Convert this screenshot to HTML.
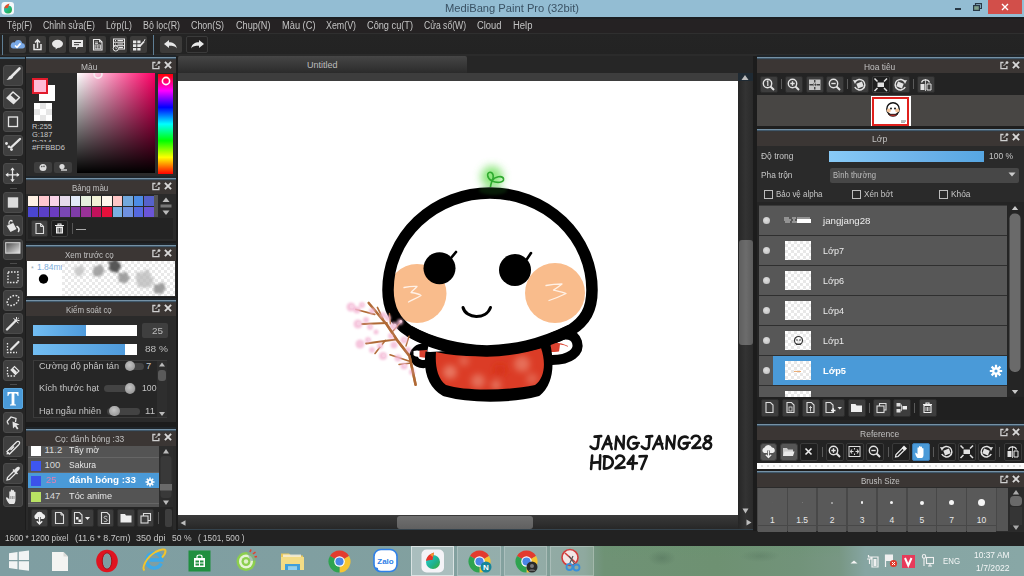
<!DOCTYPE html><html><head><meta charset="utf-8"><style>
*{margin:0;padding:0;box-sizing:border-box}
html,body{width:1024px;height:576px;overflow:hidden;background:#1f1f1f;font-family:"Liberation Sans",sans-serif}
body{position:relative}
div,span,svg{position:absolute}
.t{white-space:nowrap;line-height:1}
.btn{background:#3b3b3b;border:1px solid #262626;border-radius:2px}
.tool{left:3px;width:20px;height:21px;background:#3a3a3a;border-radius:2px}
.ph{height:16px;background:#393533;border-top:1px solid #557a94}
.ph .tt{top:3px;font-size:9px;color:#bdbdbd;white-space:nowrap;line-height:1}
</style></head><body>
<div style="left:0px;top:0px;width:1024px;height:17px;background:#93bdd3"></div>
<span class="t" style="left:445px;top:2.95px;font-size:11.5px;color:#3a5264;transform:scaleX(0.9706);transform-origin:0 0;">MediBang Paint Pro (32bit)</span>
<svg style="left:1px;top:1px" width="14" height="15" viewBox="0 0 14 15"><defs><linearGradient id="dg1" x1="0" y1="0" x2="1" y2="1"><stop offset="0" stop-color="#1fc6c8"/><stop offset="1" stop-color="#2aa836"/></linearGradient></defs><rect x="0.5" y="1" width="12.5" height="12.5" rx="3" fill="#f6f8fa"/><circle cx="7" cy="8.5" r="4" fill="url(#dg1)"/><path d="M3.2 7.5C3.5 5 5.5 3 8.5 2.5C8 4 7.5 5.5 7 7C5.5 7 4.5 7.2 3.2 7.5Z" fill="#e0502c"/></svg>
<div style="left:955px;top:8px;width:6px;height:2px;background:#283845"></div>
<svg style="left:973px;top:3px" width="9" height="8" viewBox="0 0 9 8"><rect x="0.6" y="2.6" width="5.8" height="4.8" fill="#7fa08a" stroke="#283845" stroke-width="1.2"/><path d="M2.5 2.5V0.6H8.4V5.5H6.5" fill="none" stroke="#283845" stroke-width="1.2"/></svg>
<div style="left:988px;top:0px;width:34px;height:14px;background:#d24f4a"></div>
<svg style="left:1001px;top:3px" width="8" height="8" viewBox="0 0 8 8"><path d="M1 1L7 7M7 1L1 7" stroke="#fff" stroke-width="1.4"/></svg>
<div style="left:0px;top:17px;width:1024px;height:16px;background:linear-gradient(#1b1e21 0,#1b1e21 2px,#252223 2.5px,#252223)"></div>
<div style="left:0px;top:33px;width:1024px;height:1px;background:#2f2f2f"></div>
<span class="t" style="left:6.5px;top:20.50px;font-size:10px;color:#c4c4c4;transform:scaleX(0.8334);transform-origin:0 0;">Tệp(F)</span>
<span class="t" style="left:43px;top:20.50px;font-size:10px;color:#c4c4c4;transform:scaleX(0.8741);transform-origin:0 0;">Chỉnh sửa(E)</span>
<span class="t" style="left:106px;top:20.50px;font-size:10px;color:#c4c4c4;transform:scaleX(0.8696);transform-origin:0 0;">Lớp(L)</span>
<span class="t" style="left:143px;top:20.50px;font-size:10px;color:#c4c4c4;transform:scaleX(0.8879);transform-origin:0 0;">Bộ lọc(R)</span>
<span class="t" style="left:191px;top:20.50px;font-size:10px;color:#c4c4c4;transform:scaleX(0.8863);transform-origin:0 0;">Chọn(S)</span>
<span class="t" style="left:235.5px;top:20.50px;font-size:10px;color:#c4c4c4;transform:scaleX(0.9130);transform-origin:0 0;">Chụp(N)</span>
<span class="t" style="left:281.5px;top:20.50px;font-size:10px;color:#c4c4c4;transform:scaleX(0.9277);transform-origin:0 0;">Màu (C)</span>
<span class="t" style="left:326px;top:20.50px;font-size:10px;color:#c4c4c4;transform:scaleX(0.8852);transform-origin:0 0;">Xem(V)</span>
<span class="t" style="left:367px;top:20.50px;font-size:10px;color:#c4c4c4;transform:scaleX(0.9198);transform-origin:0 0;">Công cụ(T)</span>
<span class="t" style="left:424px;top:20.50px;font-size:10px;color:#c4c4c4;transform:scaleX(0.8586);transform-origin:0 0;">Cửa sổ(W)</span>
<span class="t" style="left:477px;top:20.50px;font-size:10px;color:#c4c4c4;transform:scaleX(0.9377);transform-origin:0 0;">Cloud</span>
<span class="t" style="left:513px;top:20.50px;font-size:10px;color:#c4c4c4;transform:scaleX(0.9482);transform-origin:0 0;">Help</span>
<div style="left:0px;top:34px;width:1024px;height:22px;background:linear-gradient(#242424 0,#232323 20px,#2b2b2b 20.5px,#2b2b2b)"></div>
<div style="left:2px;top:35px;width:1px;height:20px;background:#5f7e94"></div>
<div style="left:153px;top:35px;width:1px;height:20px;background:#5f7e94"></div>
<div style="left:9px;top:36px;width:17px;height:17px;background:#3c3b3a;border-radius:2px"></div>
<div style="left:29px;top:36px;width:17px;height:17px;background:#3c3b3a;border-radius:2px"></div>
<div style="left:49px;top:36px;width:17px;height:17px;background:#3c3b3a;border-radius:2px"></div>
<div style="left:69px;top:36px;width:17px;height:17px;background:#3c3b3a;border-radius:2px"></div>
<div style="left:89px;top:36px;width:17px;height:17px;background:#3c3b3a;border-radius:2px"></div>
<div style="left:110px;top:36px;width:17px;height:17px;background:#3c3b3a;border-radius:2px"></div>
<div style="left:130px;top:36px;width:17px;height:17px;background:#3c3b3a;border-radius:2px"></div>
<svg style="left:9px;top:36px" width="17" height="17" viewBox="0 0 17 17"><path d="M4 12.5H13.5A2.6 2.6 0 0 0 13.2 7.3A4 4 0 0 0 5.6 6.5A3 3 0 0 0 4 12.5Z" fill="#7aa9e6"/><path d="M6 9.5L8 11.4L11.6 7.4" fill="none" stroke="#fff" stroke-width="1.6"/></svg>
<svg style="left:29px;top:36px" width="17" height="17" viewBox="0 0 17 17"><path d="M5 8V13.5H12V8" fill="none" stroke="#e8e8e8" stroke-width="1.5"/><path d="M8.5 12V4M6 6.5L8.5 3.8L11 6.5" fill="none" stroke="#e8e8e8" stroke-width="1.5"/></svg>
<svg style="left:49px;top:36px" width="17" height="17" viewBox="0 0 17 17"><ellipse cx="8.5" cy="7.8" rx="5.5" ry="4" fill="#e8e8e8"/><path d="M7 11L6.5 13.5L10 11Z" fill="#e8e8e8"/></svg>
<svg style="left:69px;top:36px" width="17" height="17" viewBox="0 0 17 17"><path d="M3 4H14V11H9L7 13.5V11H3Z" fill="#e8e8e8"/><path d="M5 6.5H12M5 8.7H10" stroke="#3c3b3a" stroke-width="1"/></svg>
<svg style="left:89px;top:36px" width="17" height="17" viewBox="0 0 17 17"><path d="M4.5 3.5H10.5L13 6V14H4.5Z" fill="none" stroke="#e8e8e8" stroke-width="1.1"/><path d="M10.5 3.5V6H13" fill="none" stroke="#e8e8e8" stroke-width="0.9"/><path d="M6 6H9M6 7.5H9" stroke="#e8e8e8" stroke-width="0.8"/><rect x="6" y="9" width="5.5" height="3.8" fill="none" stroke="#e8e8e8" stroke-width="0.8"/><path d="M6 10.9H11.5M8.7 9V12.8" stroke="#e8e8e8" stroke-width="0.6"/></svg>
<svg style="left:110px;top:36px" width="17" height="17" viewBox="0 0 17 17"><rect x="3.5" y="3" width="11" height="10" fill="none" stroke="#e8e8e8" stroke-width="1"/><path d="M3.5 6.3H14.5M3.5 9.6H14.5" stroke="#e8e8e8" stroke-width="0.9"/><path d="M5 4.7H6M5 8H6M7.5 4.7H13M7.5 8H13M9 11.3H13" stroke="#e8e8e8" stroke-width="1.2"/><circle cx="5.8" cy="12.5" r="2.6" fill="#3c3b3a" stroke="#e8e8e8" stroke-width="1"/><path d="M5.8 11.2V12.6H7" fill="none" stroke="#e8e8e8" stroke-width="0.7"/></svg>
<svg style="left:130px;top:36px" width="17" height="17" viewBox="0 0 17 17"><path d="M3 4.5H6.3V7.3H3ZM7.3 4.5H10.5V7.3H7.3ZM3 8.3H6.3V11H3ZM7.3 8.3H10.5V11H7.3ZM3 12H6.3V14.5H3ZM7.3 12H10.5V14.5H7.3Z" fill="#e8e8e8"/><path d="M9.5 10.5L14 5.5" stroke="#e8e8e8" stroke-width="1.8"/><path d="M14 5.5L15 3.2" stroke="#e8e8e8" stroke-width="1"/></svg>
<div style="left:160px;top:36px;width:22px;height:17px;background:#3c3b3a;border-radius:2px"></div>
<div style="left:186px;top:36px;width:22px;height:17px;background:#232222;border:1px solid #3a3a3a;border-radius:2px"></div>
<svg style="left:160px;top:36px" width="22" height="17" viewBox="0 0 22 17"><path d="M4 8L9 4V6.3C13 6.3 16 8 17 12.5C15 10 13 9.8 9 9.8V12Z" fill="#e8e8e8"/></svg>
<svg style="left:186px;top:36px" width="22" height="17" viewBox="0 0 22 17"><path d="M18 8L13 4V6.3C9 6.3 6 8 5 12.5C7 10 9 9.8 13 9.8V12Z" fill="#e8e8e8"/></svg>
<div style="left:0px;top:56px;width:1024px;height:2px;background:#1e1e1e"></div>
<div style="left:0px;top:58px;width:25px;height:476px;background:#252525"></div>
<div style="left:0px;top:57px;width:25px;height:2px;background:#4b6a80"></div>
<div style="left:3px;top:65px;width:20px;height:21px;background:#3f3f3f;border:1px solid #4b4b4b;border-radius:3px"></div>
<div style="left:3px;top:88px;width:20px;height:21px;background:#3f3f3f;border:1px solid #4b4b4b;border-radius:3px"></div>
<div style="left:3px;top:111px;width:20px;height:21px;background:#3f3f3f;border:1px solid #4b4b4b;border-radius:3px"></div>
<div style="left:3px;top:135px;width:20px;height:21px;background:#3f3f3f;border:1px solid #4b4b4b;border-radius:3px"></div>
<div style="left:3px;top:163px;width:20px;height:21px;background:#3f3f3f;border:1px solid #4b4b4b;border-radius:3px"></div>
<div style="left:3px;top:192px;width:20px;height:21px;background:#3f3f3f;border:1px solid #4b4b4b;border-radius:3px"></div>
<div style="left:3px;top:215px;width:20px;height:21px;background:#3f3f3f;border:1px solid #4b4b4b;border-radius:3px"></div>
<div style="left:3px;top:239px;width:20px;height:21px;background:#3f3f3f;border:1px solid #4b4b4b;border-radius:3px"></div>
<div style="left:3px;top:267px;width:20px;height:21px;background:#3f3f3f;border:1px solid #4b4b4b;border-radius:3px"></div>
<div style="left:3px;top:290px;width:20px;height:21px;background:#3f3f3f;border:1px solid #4b4b4b;border-radius:3px"></div>
<div style="left:3px;top:313px;width:20px;height:21px;background:#3f3f3f;border:1px solid #4b4b4b;border-radius:3px"></div>
<div style="left:3px;top:337px;width:20px;height:21px;background:#3f3f3f;border:1px solid #4b4b4b;border-radius:3px"></div>
<div style="left:3px;top:360px;width:20px;height:21px;background:#3f3f3f;border:1px solid #4b4b4b;border-radius:3px"></div>
<div style="left:3px;top:388px;width:20px;height:21px;background:#4a9ad8;border:1px solid #5aa8e0;border-radius:2px"></div>
<div style="left:3px;top:412px;width:20px;height:21px;background:#3f3f3f;border:1px solid #4b4b4b;border-radius:3px"></div>
<div style="left:3px;top:436px;width:20px;height:21px;background:#3f3f3f;border:1px solid #4b4b4b;border-radius:3px"></div>
<div style="left:3px;top:463px;width:20px;height:21px;background:#3f3f3f;border:1px solid #4b4b4b;border-radius:3px"></div>
<div style="left:3px;top:486px;width:20px;height:21px;background:#3f3f3f;border:1px solid #4b4b4b;border-radius:3px"></div>
<div style="left:10px;top:159px;width:7px;height:1px;background:#4c4c4c"></div>
<div style="left:10px;top:188px;width:7px;height:1px;background:#4c4c4c"></div>
<div style="left:10px;top:263px;width:7px;height:1px;background:#4c4c4c"></div>
<div style="left:10px;top:384px;width:7px;height:1px;background:#4c4c4c"></div>
<div style="left:10px;top:459px;width:7px;height:1px;background:#4c4c4c"></div>
<svg style="left:3px;top:65px" width="20" height="21" viewBox="0 0 20 21"><path d="M16.5 3.5L9 11" stroke="#e6e6e6" stroke-width="2.6" stroke-linecap="round"/><path d="M8.5 10.5C6.5 10.5 5.5 12 5 13.5L3.5 14.5C5.5 15 8.5 14.5 10 12.5Z" fill="#e6e6e6"/></svg>
<svg style="left:3px;top:88px" width="20" height="21" viewBox="0 0 20 21"><path d="M10 4L16.5 9.5L10.5 15.5L4 10Z" fill="none" stroke="#e6e6e6" stroke-width="1.5" stroke-linejoin="round"/><path d="M4 10L7.2 6.8L13.5 12.5L10.5 15.5Z" fill="#e6e6e6"/></svg>
<svg style="left:3px;top:111px" width="20" height="21" viewBox="0 0 20 21"><rect x="5.5" y="6" width="9" height="9.5" fill="none" stroke="#e6e6e6" stroke-width="1.3"/></svg>
<svg style="left:3px;top:135px" width="20" height="21" viewBox="0 0 20 21"><path d="M17 4L8 12.5" stroke="#e6e6e6" stroke-width="2.4" stroke-linecap="round"/><circle cx="3.5" cy="8.5" r="1.4" fill="#e6e6e6"/><circle cx="6" cy="11.8" r="1.4" fill="#e6e6e6"/><circle cx="8.5" cy="14.6" r="1.4" fill="#e6e6e6"/></svg>
<svg style="left:3px;top:163px" width="20" height="21" viewBox="0 0 20 21"><path d="M9.5 5V18.5M3 11.8H16" stroke="#e6e6e6" stroke-width="1.3"/><path d="M9.5 4.5L7.3 7.3H11.7ZM9.5 19L7.3 16.2H11.7ZM2.5 11.8L5.3 9.6V14ZM16.5 11.8L13.7 9.6V14Z" fill="#e6e6e6"/></svg>
<svg style="left:3px;top:192px" width="20" height="21" viewBox="0 0 20 21"><rect x="4.8" y="5.3" width="10.4" height="10.4" fill="#dcdcdc"/></svg>
<svg style="left:3px;top:215px" width="20" height="21" viewBox="0 0 20 21"><path d="M3.5 10.5L10 7.5L13.5 14L7.5 17Z" fill="#e6e6e6"/><path d="M3.5 10.5L10 7.5" stroke="#424242" stroke-width="0.8"/><path d="M6 9.5C5.5 5.5 8 4.5 9.5 6.5" fill="none" stroke="#e6e6e6" stroke-width="1.3"/><path d="M14 11.5C15.5 12.5 16.5 14.5 15.5 16.5" fill="none" stroke="#e6e6e6" stroke-width="1.6" stroke-linecap="round"/></svg>
<svg style="left:3px;top:239px" width="20" height="21" viewBox="0 0 20 21"><defs><linearGradient id="gg" x1="0" y1="0" x2="1" y2="1"><stop offset="0" stop-color="#4a4a4a"/><stop offset="1" stop-color="#e8e8e8"/></linearGradient></defs><rect x="2.7" y="3.7" width="14.3" height="10.5" fill="url(#gg)" stroke="#d8d8d8" stroke-width="1"/></svg>
<svg style="left:3px;top:267px" width="20" height="21" viewBox="0 0 20 21"><rect x="5" y="5" width="10" height="10.5" fill="none" stroke="#e6e6e6" stroke-width="1.4" stroke-dasharray="1.6 1.4"/></svg>
<svg style="left:3px;top:290px" width="20" height="21" viewBox="0 0 20 21"><ellipse cx="10" cy="10.5" rx="6.5" ry="4.2" transform="rotate(-35 10 10.5)" fill="none" stroke="#e6e6e6" stroke-width="1.4" stroke-dasharray="1.6 1.4"/></svg>
<svg style="left:3px;top:313px" width="20" height="21" viewBox="0 0 20 21"><path d="M4 16.5L12 8.5" stroke="#e6e6e6" stroke-width="2.4" stroke-linecap="round"/><path d="M13.5 4V6M16.5 7.5H14.5M15.8 5L14.5 6.2M12 6.5L10.5 5.5M14 9L15.5 10" stroke="#e6e6e6" stroke-width="1"/><circle cx="13" cy="7.5" r="1.5" fill="#e6e6e6"/></svg>
<svg style="left:3px;top:337px" width="20" height="21" viewBox="0 0 20 21"><path d="M4.5 6V15.5H14" fill="none" stroke="#e6e6e6" stroke-width="1.3" stroke-dasharray="1.6 1.4"/><path d="M8 12.5L15.5 5" stroke="#e6e6e6" stroke-width="2.2" stroke-linecap="round"/></svg>
<svg style="left:3px;top:360px" width="20" height="21" viewBox="0 0 20 21"><path d="M4.5 7V16H13" fill="none" stroke="#e6e6e6" stroke-width="1.3" stroke-dasharray="1.6 1.4"/><path d="M8 10L11.5 6.5L16 11L12.5 14.5Z" fill="none" stroke="#e6e6e6" stroke-width="1.1"/><path d="M8 10L10 8L14 12L12.5 14.5Z" fill="#e6e6e6"/></svg>
<svg style="left:3px;top:388px" width="20" height="21" viewBox="0 0 20 21"><path d="M4.5 4H15.5V8H14.6C14.3 6.2 13.7 5.6 11.4 5.6V15.4C11.4 16.3 12 16.6 13 16.6V17.5H7V16.6C8 16.6 8.6 16.3 8.6 15.4V5.6C6.3 5.6 5.7 6.2 5.4 8H4.5Z" fill="#fff"/></svg>
<svg style="left:3px;top:412px" width="20" height="21" viewBox="0 0 20 21"><path d="M4 9.5L8 5L13 6.5L12.5 10M5.5 12.5L4 9.5" fill="none" stroke="#e6e6e6" stroke-width="1.3"/><path d="M9.5 9.5L16.5 12.5L13.5 13.5L15.5 16.5L14 17.5L12 14.5L10 16.5Z" fill="#e6e6e6"/></svg>
<svg style="left:3px;top:436px" width="20" height="21" viewBox="0 0 20 21"><path d="M4 15.5L13 6.5C14 5.5 15.5 5 16.2 5.8C17 6.5 16.5 8 15.5 9L6.5 18Z" fill="none" stroke="#e6e6e6" stroke-width="1.3"/><path d="M4 15.5L6.5 18L3.5 18.5Z" fill="#e6e6e6"/><path d="M11 10.5L7.5 14" stroke="#e6e6e6" stroke-width="1.5"/></svg>
<svg style="left:3px;top:463px" width="20" height="21" viewBox="0 0 20 21"><path d="M4 17L4.5 14.5L11 8L13 10L6.5 16.5Z" fill="none" stroke="#e6e6e6" stroke-width="1.3"/><path d="M10.5 7.5L12 6L13.5 4.5C14.5 3.5 16.5 3.5 16.8 4.8C17.2 6 16 7 15 8L13.5 9.5Z" fill="#e6e6e6"/><path d="M10 6.5L14.5 11" stroke="#e6e6e6" stroke-width="1.4"/></svg>
<svg style="left:3px;top:486px" width="20" height="21" viewBox="0 0 20 21"><path d="M6.5 18C5 16.5 3 13.5 3 12C3 11 4.2 11 5 12L6.3 13.5V6C6.3 5 7.8 5 7.8 6V10.5V4.3C7.8 3.3 9.4 3.3 9.4 4.3V10.5V4.8C9.4 3.8 11 3.8 11 4.8V10.8V6.3C11 5.3 12.5 5.3 12.5 6.3V13C12.5 15.5 12 17 11 18Z" fill="#e6e6e6"/><path d="M7.8 10V13M9.4 10V13M11 10V13" stroke="#424242" stroke-width="0.5"/></svg>
<div style="left:25px;top:58px;width:153px;height:476px;background:#1c1c1c"></div>
<div style="left:26px;top:73px;width:150px;height:104px;background:#2a2a2a"></div>
<div style="left:26px;top:55px;width:150px;height:2px;background:#1f252a"></div><div style="left:26px;top:57px;width:150px;height:1px;background:#7591a5"></div><div style="left:26px;top:58px;width:150px;height:1px;background:#41586a"></div><div style="left:26px;top:59px;width:150px;height:14px;background:linear-gradient(#333a40 0,#3b3634 1px,#3b3634)"></div><span class="t" style="left:81px;top:61.60px;font-size:9.6px;color:#c0c0c0;transform:scaleX(0.8729);transform-origin:0 0;">Màu</span><svg style="left:151.5px;top:60.5px" width="9" height="9" viewBox="0 0 9 9"><path d="M3.5 1.5H0.9V7.6H6.9V5" fill="none" stroke="#cfcfcf" stroke-width="1.3"/><path d="M3.5 5L7.2 1.3" stroke="#cfcfcf" stroke-width="1"/><circle cx="7" cy="1.6" r="1.4" fill="#cfcfcf"/></svg><svg style="left:164px;top:60.5px" width="8" height="8" viewBox="0 0 8 8"><path d="M0.9 0.9L7.1 7.1M7.1 0.9L0.9 7.1" stroke="#d8d8d8" stroke-width="1.9"/></svg>
<div style="left:26px;top:194px;width:150px;height:47px;background:#2a2a2a"></div>
<div style="left:26px;top:176px;width:150px;height:2px;background:#1f252a"></div><div style="left:26px;top:178px;width:150px;height:1px;background:#7591a5"></div><div style="left:26px;top:179px;width:150px;height:1px;background:#41586a"></div><div style="left:26px;top:180px;width:150px;height:14px;background:linear-gradient(#333a40 0,#3b3634 1px,#3b3634)"></div><span class="t" style="left:71.5px;top:182.60px;font-size:9.6px;color:#c0c0c0;transform:scaleX(0.8295);transform-origin:0 0;">Bảng màu</span><svg style="left:151.5px;top:181.5px" width="9" height="9" viewBox="0 0 9 9"><path d="M3.5 1.5H0.9V7.6H6.9V5" fill="none" stroke="#cfcfcf" stroke-width="1.3"/><path d="M3.5 5L7.2 1.3" stroke="#cfcfcf" stroke-width="1"/><circle cx="7" cy="1.6" r="1.4" fill="#cfcfcf"/></svg><svg style="left:164px;top:181.5px" width="8" height="8" viewBox="0 0 8 8"><path d="M0.9 0.9L7.1 7.1M7.1 0.9L0.9 7.1" stroke="#d8d8d8" stroke-width="1.9"/></svg>
<div style="left:26px;top:261px;width:150px;height:36px;background:#2a2a2a"></div>
<div style="left:26px;top:243px;width:150px;height:2px;background:#1f252a"></div><div style="left:26px;top:245px;width:150px;height:1px;background:#7591a5"></div><div style="left:26px;top:246px;width:150px;height:1px;background:#41586a"></div><div style="left:26px;top:247px;width:150px;height:14px;background:linear-gradient(#333a40 0,#3b3634 1px,#3b3634)"></div><span class="t" style="left:65.3px;top:249.60px;font-size:9.6px;color:#c0c0c0;transform:scaleX(0.8328);transform-origin:0 0;">Xem trước cọ</span><svg style="left:151.5px;top:248.5px" width="9" height="9" viewBox="0 0 9 9"><path d="M3.5 1.5H0.9V7.6H6.9V5" fill="none" stroke="#cfcfcf" stroke-width="1.3"/><path d="M3.5 5L7.2 1.3" stroke="#cfcfcf" stroke-width="1"/><circle cx="7" cy="1.6" r="1.4" fill="#cfcfcf"/></svg><svg style="left:164px;top:248.5px" width="8" height="8" viewBox="0 0 8 8"><path d="M0.9 0.9L7.1 7.1M7.1 0.9L0.9 7.1" stroke="#d8d8d8" stroke-width="1.9"/></svg>
<div style="left:26px;top:316px;width:150px;height:106px;background:#2a2a2a"></div>
<div style="left:26px;top:298px;width:150px;height:2px;background:#1f252a"></div><div style="left:26px;top:300px;width:150px;height:1px;background:#7591a5"></div><div style="left:26px;top:301px;width:150px;height:1px;background:#41586a"></div><div style="left:26px;top:302px;width:150px;height:14px;background:linear-gradient(#333a40 0,#3b3634 1px,#3b3634)"></div><span class="t" style="left:66px;top:304.60px;font-size:9.6px;color:#c0c0c0;transform:scaleX(0.8254);transform-origin:0 0;">Kiểm soát cọ</span><svg style="left:151.5px;top:303.5px" width="9" height="9" viewBox="0 0 9 9"><path d="M3.5 1.5H0.9V7.6H6.9V5" fill="none" stroke="#cfcfcf" stroke-width="1.3"/><path d="M3.5 5L7.2 1.3" stroke="#cfcfcf" stroke-width="1"/><circle cx="7" cy="1.6" r="1.4" fill="#cfcfcf"/></svg><svg style="left:164px;top:303.5px" width="8" height="8" viewBox="0 0 8 8"><path d="M0.9 0.9L7.1 7.1M7.1 0.9L0.9 7.1" stroke="#d8d8d8" stroke-width="1.9"/></svg>
<div style="left:26px;top:446px;width:150px;height:85px;background:#2a2a2a"></div>
<div style="left:26px;top:427px;width:150px;height:2px;background:#1f252a"></div><div style="left:26px;top:429px;width:150px;height:1px;background:#7591a5"></div><div style="left:26px;top:430px;width:150px;height:1px;background:#41586a"></div><div style="left:26px;top:431px;width:150px;height:15px;background:linear-gradient(#333a40 0,#3b3634 1px,#3b3634)"></div><span class="t" style="left:55px;top:433.60px;font-size:9.6px;color:#c0c0c0;transform:scaleX(0.8773);transform-origin:0 0;">Cọ: đánh bóng :33</span><svg style="left:151.5px;top:432.5px" width="9" height="9" viewBox="0 0 9 9"><path d="M3.5 1.5H0.9V7.6H6.9V5" fill="none" stroke="#cfcfcf" stroke-width="1.3"/><path d="M3.5 5L7.2 1.3" stroke="#cfcfcf" stroke-width="1"/><circle cx="7" cy="1.6" r="1.4" fill="#cfcfcf"/></svg><svg style="left:164px;top:432.5px" width="8" height="8" viewBox="0 0 8 8"><path d="M0.9 0.9L7.1 7.1M7.1 0.9L0.9 7.1" stroke="#d8d8d8" stroke-width="1.9"/></svg>
<div style="left:178px;top:56px;width:575px;height:474px;background:#262626"></div>
<div style="left:178px;top:56px;width:289px;height:17px;background:linear-gradient(#464646,#2b2b2b);border-radius:2px 2px 0 0"></div>
<span class="t" style="left:307px;top:60.50px;font-size:9px;color:#bdbdbd;">Untitled</span>
<div style="left:178px;top:73px;width:561px;height:8px;background:#3d3d3d"></div>
<div style="left:178px;top:81px;width:560px;height:434px;background:#ffffff"></div>
<div style="left:738px;top:73px;width:15px;height:457px;background:linear-gradient(90deg,#262626,#333 50%,#2a2a2a)"></div>
<div style="left:738px;top:73px;width:15px;height:8px;background:#1f2a33"></div>
<svg style="left:741px;top:74px" width="8" height="7" viewBox="0 0 8 7"><path d="M4 1L7.5 6H0.5Z" fill="#bdbdbd"/></svg>
<div style="left:739px;top:239.5px;width:14px;height:105px;background:linear-gradient(90deg,#5e5e5e,#6c6c6c 50%,#5c5c5c);border-radius:3px"></div>
<svg style="left:742px;top:508px" width="7" height="6" viewBox="0 0 7 6"><path d="M3.5 5.5L0.5 0.5H6.5Z" fill="#bdbdbd"/></svg>
<div style="left:178px;top:515px;width:560px;height:15px;background:linear-gradient(#3a3a3a,#262626)"></div>
<div style="left:178px;top:529px;width:575px;height:1px;background:#34424c"></div>
<svg style="left:179.5px;top:520px" width="6" height="6" viewBox="0 0 6 6"><path d="M0.5 3L5.5 0.2V5.8Z" fill="#bdbdbd"/></svg>
<svg style="left:746px;top:519px" width="6" height="7" viewBox="0 0 6 7"><path d="M5.5 3.5L0.5 0.5V6.5Z" fill="#bdbdbd"/></svg>
<div style="left:397px;top:515.8px;width:136px;height:13.2px;background:linear-gradient(#707070,#606060);border-radius:3px"></div>
<div style="left:0px;top:530px;width:1024px;height:16px;background:#222222"></div>
<span class="t" style="left:5px;top:534.30px;font-size:9px;color:#c8c8c8;transform:scaleX(0.9130);transform-origin:0 0;">1600 * 1200 pixel</span>
<span class="t" style="left:75px;top:534.30px;font-size:9px;color:#c8c8c8;transform:scaleX(0.9937);transform-origin:0 0;">(11.6 * 8.7cm)</span>
<span class="t" style="left:136px;top:534.30px;font-size:9px;color:#c8c8c8;transform:scaleX(0.9992);transform-origin:0 0;">350 dpi</span>
<span class="t" style="left:172px;top:534.30px;font-size:9px;color:#c8c8c8;transform:scaleX(0.9506);transform-origin:0 0;">50 %</span>
<span class="t" style="left:197.5px;top:534.30px;font-size:9px;color:#c8c8c8;transform:scaleX(0.9113);transform-origin:0 0;">( 1501, 500 )</span>
<div style="left:753px;top:56px;width:271px;height:475px;background:#1c1c1c"></div>
<div style="left:757px;top:73px;width:267px;height:22px;background:#232323"></div>
<div style="left:757px;top:95px;width:267px;height:31px;background:#484644"></div>
<div style="left:757px;top:55px;width:267px;height:2px;background:#1f252a"></div><div style="left:757px;top:57px;width:267px;height:1px;background:#7591a5"></div><div style="left:757px;top:58px;width:267px;height:1px;background:#41586a"></div><div style="left:757px;top:59px;width:267px;height:14px;background:linear-gradient(#333a40 0,#3b3634 1px,#3b3634)"></div><span class="t" style="left:864px;top:61.60px;font-size:9.6px;color:#c0c0c0;transform:scaleX(0.8754);transform-origin:0 0;">Hoa tiêu</span><svg style="left:999.5px;top:60.5px" width="9" height="9" viewBox="0 0 9 9"><path d="M3.5 1.5H0.9V7.6H6.9V5" fill="none" stroke="#cfcfcf" stroke-width="1.3"/><path d="M3.5 5L7.2 1.3" stroke="#cfcfcf" stroke-width="1"/><circle cx="7" cy="1.6" r="1.4" fill="#cfcfcf"/></svg><svg style="left:1012px;top:60.5px" width="8" height="8" viewBox="0 0 8 8"><path d="M0.9 0.9L7.1 7.1M7.1 0.9L0.9 7.1" stroke="#d8d8d8" stroke-width="1.9"/></svg>
<div style="left:757px;top:146px;width:267px;height:277px;background:#2a2a2a"></div>
<div style="left:757px;top:127px;width:267px;height:2px;background:#1f252a"></div><div style="left:757px;top:129px;width:267px;height:1px;background:#7591a5"></div><div style="left:757px;top:130px;width:267px;height:1px;background:#41586a"></div><div style="left:757px;top:131px;width:267px;height:15px;background:linear-gradient(#333a40 0,#3b3634 1px,#3b3634)"></div><span class="t" style="left:872px;top:133.60px;font-size:9.6px;color:#c0c0c0;transform:scaleX(0.9015);transform-origin:0 0;">Lớp</span><svg style="left:999.5px;top:132.5px" width="9" height="9" viewBox="0 0 9 9"><path d="M3.5 1.5H0.9V7.6H6.9V5" fill="none" stroke="#cfcfcf" stroke-width="1.3"/><path d="M3.5 5L7.2 1.3" stroke="#cfcfcf" stroke-width="1"/><circle cx="7" cy="1.6" r="1.4" fill="#cfcfcf"/></svg><svg style="left:1012px;top:132.5px" width="8" height="8" viewBox="0 0 8 8"><path d="M0.9 0.9L7.1 7.1M7.1 0.9L0.9 7.1" stroke="#d8d8d8" stroke-width="1.9"/></svg>
<div style="left:757px;top:440px;width:267px;height:29px;background:#232323"></div>
<div style="left:757px;top:422px;width:267px;height:2px;background:#1f252a"></div><div style="left:757px;top:424px;width:267px;height:1px;background:#7591a5"></div><div style="left:757px;top:425px;width:267px;height:1px;background:#41586a"></div><div style="left:757px;top:426px;width:267px;height:14px;background:linear-gradient(#333a40 0,#3b3634 1px,#3b3634)"></div><span class="t" style="left:860px;top:428.60px;font-size:9.6px;color:#c0c0c0;transform:scaleX(0.8874);transform-origin:0 0;">Reference</span><svg style="left:999.5px;top:427.5px" width="9" height="9" viewBox="0 0 9 9"><path d="M3.5 1.5H0.9V7.6H6.9V5" fill="none" stroke="#cfcfcf" stroke-width="1.3"/><path d="M3.5 5L7.2 1.3" stroke="#cfcfcf" stroke-width="1"/><circle cx="7" cy="1.6" r="1.4" fill="#cfcfcf"/></svg><svg style="left:1012px;top:427.5px" width="8" height="8" viewBox="0 0 8 8"><path d="M0.9 0.9L7.1 7.1M7.1 0.9L0.9 7.1" stroke="#d8d8d8" stroke-width="1.9"/></svg>
<div style="left:757px;top:487px;width:267px;height:44px;background:#2a2a2a"></div>
<div style="left:757px;top:469px;width:267px;height:2px;background:#1f252a"></div><div style="left:757px;top:471px;width:267px;height:1px;background:#7591a5"></div><div style="left:757px;top:472px;width:267px;height:1px;background:#41586a"></div><div style="left:757px;top:473px;width:267px;height:14px;background:linear-gradient(#333a40 0,#3b3634 1px,#3b3634)"></div><span class="t" style="left:860.5px;top:475.60px;font-size:9.6px;color:#c0c0c0;transform:scaleX(0.8359);transform-origin:0 0;">Brush Size</span><svg style="left:999.5px;top:474.5px" width="9" height="9" viewBox="0 0 9 9"><path d="M3.5 1.5H0.9V7.6H6.9V5" fill="none" stroke="#cfcfcf" stroke-width="1.3"/><path d="M3.5 5L7.2 1.3" stroke="#cfcfcf" stroke-width="1"/><circle cx="7" cy="1.6" r="1.4" fill="#cfcfcf"/></svg><svg style="left:1012px;top:474.5px" width="8" height="8" viewBox="0 0 8 8"><path d="M0.9 0.9L7.1 7.1M7.1 0.9L0.9 7.1" stroke="#d8d8d8" stroke-width="1.9"/></svg>
<div style="left:0px;top:546px;width:1024px;height:30px;background:linear-gradient(90deg,#7f9ea2 0%,#809fa1 30%,#83a19e 50%,#7d9b90 57%,#6f9275 59%,#6e9172 70%,#72937a 78%,#789784 82%,#86a5a2 84.5%,#88a7a6 100%)"></div>
<div style="left:600px;top:546px;width:240px;height:30px;background:radial-gradient(ellipse 14px 8px at 62px 12px,rgba(70,100,80,0.35),transparent),radial-gradient(ellipse 20px 6px at 160px 10px,rgba(70,100,80,0.25),transparent),linear-gradient(rgba(100,150,110,0.15),transparent 40%)"></div>
<div style="left:77px;top:73px;width:78px;height:100px;background:linear-gradient(to top,#000,rgba(0,0,0,0)),linear-gradient(to right,#fff,#ff0066)"></div>
<div style="left:158px;top:74px;width:15px;height:100px;background:linear-gradient(#ff0000 0%,#ff00ff 16.7%,#0000ff 33.3%,#00ffff 50%,#00ff00 66.7%,#ffff00 83.3%,#ff0000 100%)"></div>
<svg style="left:160px;top:75px" width="12" height="12" viewBox="0 0 12 12"><circle cx="6" cy="6" r="3.6" fill="none" stroke="#fff" stroke-width="1.6"/></svg>
<svg style="left:92px;top:73px" width="12" height="10" viewBox="0 0 12 10"><circle cx="6" cy="1.2" r="3.9" fill="none" stroke="#f6e8ee" stroke-width="1.8"/></svg>
<div style="left:39px;top:85px;width:16px;height:16px;background:#ffffff"></div>
<div style="left:32px;top:78px;width:16px;height:16px;background:#ffbbd6;border:2px solid #e21b2c"></div>
<div style="left:34px;top:103px;width:18px;height:18px;background-color:#fff;background-image:linear-gradient(45deg,#e6e6e6 25%,transparent 25%,transparent 75%,#e6e6e6 75%),linear-gradient(45deg,#e6e6e6 25%,transparent 25%,transparent 75%,#e6e6e6 75%);background-size:12px 12px;background-position:0 0,6px 6px"></div>
<span class="t" style="left:32px;top:123.25px;font-size:7.5px;color:#c6c6c6;">R:255</span>
<span class="t" style="left:32px;top:130.55px;font-size:7.5px;color:#c6c6c6;">G:187</span>
<div style="left:30px;top:137.5px;width:50px;height:4px;overflow:hidden"><span class="t" style="left:2px;top:1.25px;font-size:7.5px;color:#c6c6c6;">B:214</span></div>
<span class="t" style="left:32px;top:144.25px;font-size:7.5px;color:#c6c6c6;">#FFBBD6</span>
<div style="left:34px;top:162px;width:18px;height:11px;background:#3e3e3e;border-radius:2px"></div>
<div style="left:54px;top:162px;width:18px;height:11px;background:#3e3e3e;border-radius:2px"></div>
<svg style="left:38px;top:163px" width="10" height="9" viewBox="0 0 10 9"><circle cx="5" cy="4.5" r="3.5" fill="#ddd"/><circle cx="3.8" cy="3.6" r="0.8" fill="#555"/><circle cx="6" cy="3.4" r="0.8" fill="#555"/></svg>
<svg style="left:58px;top:163px" width="10" height="9" viewBox="0 0 10 9"><circle cx="4" cy="3.5" r="2.6" fill="#ddd"/><path d="M3 7H9" stroke="#ddd" stroke-width="1.4"/></svg>
<div style="left:28px;top:196px;width:9.5px;height:9.5px;background:#fff2e4"></div>
<div style="left:28px;top:207px;width:9.5px;height:9.5px;background:#4a46d0"></div>
<div style="left:39px;top:196px;width:9.5px;height:9.5px;background:#ffc9cf"></div>
<div style="left:39px;top:207px;width:9.5px;height:9.5px;background:#5b3fc6"></div>
<div style="left:49.5px;top:196px;width:9.5px;height:9.5px;background:#f9d3e8"></div>
<div style="left:49.5px;top:207px;width:9.5px;height:9.5px;background:#6b3cc0"></div>
<div style="left:60px;top:196px;width:9.5px;height:9.5px;background:#e6daea"></div>
<div style="left:60px;top:207px;width:9.5px;height:9.5px;background:#7a47b4"></div>
<div style="left:70.5px;top:196px;width:9.5px;height:9.5px;background:#e2eaf8"></div>
<div style="left:70.5px;top:207px;width:9.5px;height:9.5px;background:#7f3ca9"></div>
<div style="left:81px;top:196px;width:9.5px;height:9.5px;background:#e6f0de"></div>
<div style="left:81px;top:207px;width:9.5px;height:9.5px;background:#993298"></div>
<div style="left:91.5px;top:196px;width:9.5px;height:9.5px;background:#f2f2d6"></div>
<div style="left:91.5px;top:207px;width:9.5px;height:9.5px;background:#c2115b"></div>
<div style="left:102px;top:196px;width:9.5px;height:9.5px;background:#fff7ec"></div>
<div style="left:102px;top:207px;width:9.5px;height:9.5px;background:#e6103b"></div>
<div style="left:112.5px;top:196px;width:9.5px;height:9.5px;background:#ffc7c6"></div>
<div style="left:112.5px;top:207px;width:9.5px;height:9.5px;background:#7bb0e1"></div>
<div style="left:123px;top:196px;width:9.5px;height:9.5px;background:#73a9dd"></div>
<div style="left:123px;top:207px;width:9.5px;height:9.5px;background:#6f91e0"></div>
<div style="left:133.5px;top:196px;width:9.5px;height:9.5px;background:#4d8de6"></div>
<div style="left:133.5px;top:207px;width:9.5px;height:9.5px;background:#5569df"></div>
<div style="left:144px;top:196px;width:9.5px;height:9.5px;background:#5662cb"></div>
<div style="left:144px;top:207px;width:9.5px;height:9.5px;background:#6b55d8"></div>
<div style="left:154px;top:195px;width:4px;height:22px;background:#555"></div>
<svg style="left:159px;top:196px" width="14" height="21" viewBox="0 0 14 21"><path d="M7 1.5L3.5 6H10.5Z" fill="#bbb"/><rect x="1.5" y="8.5" width="11" height="3" fill="#777"/><path d="M7 19L3.5 14.5H10.5Z" fill="#bbb"/></svg>
<div style="left:28px;top:218px;width:145px;height:21px;background:#232323"></div>
<div style="left:31px;top:220px;width:17px;height:17px;background:#414141;border:1px solid #2e2e2e;border-radius:2px"></div>
<div style="left:51px;top:220px;width:17px;height:17px;background:#1e1e1e;border:1px solid #3a3a3a;border-radius:2px"></div>
<svg style="left:31px;top:220px" width="17" height="17" viewBox="0 0 17 17"><path d="M5 3.5H9.5L12.5 6.5V13.5H5Z" fill="none" stroke="#ddd" stroke-width="1.1"/><path d="M9.5 3.5V6.5H12.5" fill="none" stroke="#ddd" stroke-width="1"/></svg>
<svg style="left:51px;top:220px" width="17" height="17" viewBox="0 0 17 17"><path d="M4 5.5H13M7 5.5V4H10V5.5" fill="none" stroke="#eee" stroke-width="1.1"/><path d="M5 6.5H12V13.5H5Z" fill="#eee"/><path d="M7 8V12.5M8.5 8V12.5M10 8V12.5" stroke="#1e1e1e" stroke-width="0.8"/></svg>
<div style="left:72px;top:223px;width:1px;height:11px;background:#555"></div>
<div style="left:76px;top:229px;width:10px;height:1px;background:#aaa"></div>
<div style="left:27px;top:261px;width:35px;height:35px;background:#fff"></div>
<div style="left:62px;top:261px;width:113px;height:35px;background-color:#fff;background-image:linear-gradient(45deg,#e9e9e9 25%,transparent 25%,transparent 75%,#e9e9e9 75%),linear-gradient(45deg,#e9e9e9 25%,transparent 25%,transparent 75%,#e9e9e9 75%);background-size:6px 6px;background-position:0 0,3px 3px"></div>
<div style="left:27px;top:261px;width:35px;height:12px;overflow:hidden"><span class="t" style="left:4px;top:3.50px;font-size:7px;color:#9aa8b4;">*</span><span class="t" style="left:10px;top:2.25px;font-size:8.5px;color:#7eaedb;">1.84mm</span></div>
<svg style="left:38px;top:274px" width="11" height="11" viewBox="0 0 11 11"><circle cx="5.5" cy="5" r="4.7" fill="#000"/></svg>
<svg style="left:62px;top:261px" width="113" height="35" viewBox="0 0 113 35"><defs><filter id="bl" x="-50%" y="-50%" width="200%" height="200%"><feGaussianBlur stdDeviation="1"/></filter></defs><polygon points="23.2,9.6 20.7,12.5 19.3,15.7 16.8,14.7 13.1,14.4 13.3,10.7 11.4,6.0 15.5,6.2 20.3,3.2 21.5,7.4" fill="#c4c4c4" opacity="0.85" filter="url(#bl)"/><polygon points="42.6,10.6 40.2,13.0 39.3,14.9 35.0,15.4 30.9,14.5 31.1,9.2 31.5,5.9 34.1,5.3 39.2,3.1 41.0,5.9" fill="#9c9c9c" opacity="0.9" filter="url(#bl)"/><polygon points="59.4,4.9 57.0,8.9 55.6,11.7 50.4,10.8 46.6,8.3 47.7,4.1 45.7,0.6 50.0,0.2 53.5,-2.5 57.5,2.2" fill="#505050" opacity="0.95" filter="url(#bl)"/><polygon points="68.1,17.4 65.9,19.7 63.8,22.4 59.5,21.5 56.4,20.5 56.7,17.4 56.0,11.8 61.2,12.2 63.9,10.1 65.4,13.1" fill="#989898" opacity="0.9" filter="url(#bl)"/><polygon points="91.9,17.4 90.9,22.2 87.3,26.6 80.6,26.8 75.8,25.5 73.9,18.3 74.3,10.7 80.0,11.7 86.1,7.4 89.3,15.7" fill="#bdbdbd" opacity="0.8" filter="url(#bl)"/><polygon points="103.8,26.7 102.1,30.0 99.3,33.3 96.9,32.4 91.9,31.8 91.9,26.5 91.6,23.4 96.4,23.4 101.0,20.9 102.8,24.9" fill="#969696" opacity="0.9" filter="url(#bl)"/></svg>
<div style="left:33px;top:325px;width:104px;height:11px;background:#fff"></div>
<div style="left:33px;top:325px;width:53px;height:11px;background:linear-gradient(90deg,#72bdf2,#4f9bdc)"></div>
<div style="left:142px;top:323px;width:26px;height:15px;background:#3f3f3f;border-radius:2px"></div>
<span class="t" style="left:152px;top:326.45px;font-size:9.5px;color:#bdbdbd;transform:scaleX(1.0411);transform-origin:0 0;">25</span>
<div style="left:33px;top:344px;width:104px;height:11px;background:#fff"></div>
<div style="left:33px;top:344px;width:92px;height:11px;background:linear-gradient(90deg,#72bdf2,#4f9bdc)"></div>
<span class="t" style="left:145px;top:344.25px;font-size:9.5px;color:#bdbdbd;transform:scaleX(1.0622);transform-origin:0 0;">88 %</span>
<div style="left:33px;top:360px;width:134px;height:58px;border:1px solid #3b3b3b;background:#262626"></div>
<span class="t" style="left:38.5px;top:362.35px;font-size:9.3px;color:#c4c4c4;transform:scaleX(0.9865);transform-origin:0 0;">Cường độ phân tán</span>
<span class="t" style="left:38.5px;top:384.35px;font-size:9.3px;color:#c4c4c4;transform:scaleX(0.9767);transform-origin:0 0;">Kích thước hạt</span>
<span class="t" style="left:38.5px;top:407.05px;font-size:9.3px;color:#c4c4c4;transform:scaleX(0.9829);transform-origin:0 0;">Hạt ngẫu nhiên</span>
<div style="left:125px;top:362.5px;width:19px;height:7px;background:#434343;border-radius:3.5px"></div><div style="left:124.8px;top:360.8px;width:10.4px;height:10.4px;background:radial-gradient(circle at 45% 40%,#c4c4c4,#8a8a8a);border-radius:50%"></div>
<div style="left:104px;top:385.0px;width:32px;height:7px;background:#434343;border-radius:3.5px"></div><div style="left:124.49999999999999px;top:383.3px;width:10.4px;height:10.4px;background:radial-gradient(circle at 45% 40%,#c4c4c4,#8a8a8a);border-radius:50%"></div>
<div style="left:106.5px;top:407.5px;width:33.5px;height:7px;background:#434343;border-radius:3.5px"></div><div style="left:109.39999999999999px;top:405.8px;width:10.4px;height:10.4px;background:radial-gradient(circle at 45% 40%,#c4c4c4,#8a8a8a);border-radius:50%"></div>
<span class="t" style="left:146px;top:362.35px;font-size:9.3px;color:#c4c4c4;">7</span>
<span class="t" style="left:141.5px;top:384.35px;font-size:9.3px;color:#c4c4c4;transform:scaleX(0.9346);transform-origin:0 0;">100</span>
<span class="t" style="left:145px;top:407.05px;font-size:9.3px;color:#c4c4c4;transform:scaleX(1.0359);transform-origin:0 0;">11</span>
<div style="left:157px;top:361px;width:10px;height:56px;background:#2e2e2e"></div>
<svg style="left:157px;top:361px" width="10" height="56" viewBox="0 0 10 56"><path d="M5 1.5L2 5.5H8Z" fill="#bbb"/><rect x="1" y="9" width="8" height="11" rx="3" fill="#5a5a5a"/><path d="M5 55L2 51H8Z" fill="#bbb"/></svg>
<div style="left:28px;top:446px;width:131px;height:61px;background:#4e4e4e"></div>
<div style="left:28px;top:446px;width:131px;height:61px;overflow:hidden;background:#4e4e4e"><div style="left:0px;top:-3px;width:131px;height:14px;background:#545454"></div><div style="left:0px;top:11px;width:131px;height:1px;background:#666"></div><div style="left:2.5px;top:0px;width:10px;height:9.5px;background:#ffffff"></div><span class="t" style="left:16.5px;top:-0.95px;font-size:9.5px;color:#d8d8d8;">11.2</span><span class="t" style="left:40.5px;top:-0.95px;font-size:9.5px;color:#e6e6e6;transform:scaleX(0.9197);transform-origin:0 0;">Tẩy mờ</span><div style="left:0px;top:12px;width:131px;height:14px;background:#545454"></div><div style="left:0px;top:26px;width:131px;height:1px;background:#666"></div><div style="left:2.5px;top:15px;width:10px;height:9.5px;background:#3d56f0"></div><span class="t" style="left:16.5px;top:14.05px;font-size:9.5px;color:#d8d8d8;">100</span><span class="t" style="left:40.5px;top:14.05px;font-size:9.5px;color:#e6e6e6;transform:scaleX(0.8970);transform-origin:0 0;">Sakura</span><div style="left:0px;top:27px;width:131px;height:15px;background:#4a9ad8"></div><div style="left:2.5px;top:30px;width:10px;height:9.5px;background:#3b52ea"></div><span class="t" style="left:17.5px;top:29.05px;font-size:9.5px;color:#e07fb0;transform:scaleX(0.9938);transform-origin:0 0;">25</span><span class="t" style="left:40.5px;top:28.90px;font-size:9.8px;color:#ffffff;font-weight:bold;transform:scaleX(1.0006);transform-origin:0 0;">đánh bóng :33</span><svg style="left:117px;top:30.5px" width="10" height="10" viewBox="0 0 10 10"><circle cx="5" cy="5" r="2.8" fill="#fff"/><path d="M5 0.5V9.5M0.5 5H9.5M1.8 1.8L8.2 8.2M8.2 1.8L1.8 8.2" stroke="#fff" stroke-width="1.6"/><circle cx="5" cy="5" r="1.2" fill="#4a9ad8"/></svg><div style="left:0px;top:43px;width:131px;height:14px;background:#545454"></div><div style="left:0px;top:57px;width:131px;height:1px;background:#666"></div><div style="left:2.5px;top:46px;width:10px;height:9.5px;background:#b9e263"></div><span class="t" style="left:16.5px;top:45.05px;font-size:9.5px;color:#d8d8d8;">147</span><span class="t" style="left:40.5px;top:45.05px;font-size:9.5px;color:#e6e6e6;transform:scaleX(0.9696);transform-origin:0 0;">Tóc anime</span><div style="left:0px;top:58px;width:131px;height:14px;background:#545454"></div><div style="left:0px;top:72px;width:131px;height:1px;background:#666"></div><div style="left:2.5px;top:61px;width:10px;height:9.5px;background:#b9e263"></div></div>
<div style="left:159px;top:446px;width:14px;height:61px;background:#2c2c2c"></div>
<svg style="left:159px;top:446px" width="14" height="61" viewBox="0 0 14 61"><path d="M7 3L4 7.5H10Z" fill="#bbb"/><rect x="1.5" y="10" width="11" height="42" rx="3" fill="#393939"/><rect x="1" y="38" width="12" height="6.5" fill="#6a6a6a"/><path d="M7 59L4 54.5H10Z" fill="#bbb"/></svg>
<div style="left:28px;top:507px;width:145px;height:23px;background:#242424"></div>
<div style="left:31px;top:509px;width:17px;height:18px;background:#3d3d3d;border:1px solid #2e2e2e;border-radius:2px"></div>
<div style="left:51px;top:509px;width:17.5px;height:18px;background:#3d3d3d;border:1px solid #2e2e2e;border-radius:2px"></div>
<div style="left:71px;top:509px;width:23px;height:18px;background:#3d3d3d;border:1px solid #2e2e2e;border-radius:2px"></div>
<div style="left:96.5px;top:509px;width:17.5px;height:18px;background:#3d3d3d;border:1px solid #2e2e2e;border-radius:2px"></div>
<div style="left:117px;top:509px;width:17.5px;height:18px;background:#3d3d3d;border:1px solid #2e2e2e;border-radius:2px"></div>
<div style="left:136.5px;top:509px;width:17.5px;height:18px;background:#3d3d3d;border:1px solid #2e2e2e;border-radius:2px"></div>
<div style="left:158px;top:512px;width:1px;height:12px;background:#555"></div>
<div style="left:164.5px;top:509px;width:7px;height:18px;background:#3e3e3e;border-radius:2px"></div>
<svg style="left:31px;top:509px" width="17" height="18" viewBox="0 0 17 18"><path d="M4.5 10A3 3 0 0 1 5 5A3.8 3.8 0 0 1 12 5A2.6 2.6 0 0 1 12.5 10Z" fill="#eee"/><path d="M8.5 8V15M5.8 12.3L8.5 15L11.2 12.3" fill="none" stroke="#3d3d3d" stroke-width="2.6"/><path d="M8.5 8V15M5.8 12.3L8.5 15L11.2 12.3" fill="none" stroke="#eee" stroke-width="1.4"/></svg>
<svg style="left:51px;top:509px" width="17" height="18" viewBox="0 0 17 18"><path d="M4.5 3.5H10L12.5 6V14.5H4.5Z" fill="none" stroke="#ddd" stroke-width="1.1"/><path d="M10 3.5V6H12.5" fill="none" stroke="#ddd" stroke-width="1"/></svg>
<svg style="left:71px;top:509px" width="23" height="18" viewBox="0 0 23 18"><path d="M3.5 3.5H8.5L11 6V14.5H3.5Z" fill="none" stroke="#ddd" stroke-width="1.1"/><rect x="5" y="8" width="2.5" height="2.5" fill="#eee"/><rect x="7.5" y="10.5" width="2.5" height="2.5" fill="#eee"/><path d="M14 8H19L16.5 11Z" fill="#eee"/></svg>
<svg style="left:96.5px;top:509px" width="18" height="18" viewBox="0 0 18 18"><path d="M4.5 3.5H10L12.5 6V14.5H4.5Z" fill="none" stroke="#ddd" stroke-width="1.1"/><path d="M10.3 7.8C9.8 7 7 7 7 8.5C7 10 10.3 9.5 10.3 11.3C10.3 12.8 7.3 12.8 6.8 12" fill="none" stroke="#ddd" stroke-width="0.9"/></svg>
<svg style="left:117px;top:509px" width="18" height="18" viewBox="0 0 18 18"><path d="M3.5 5H8L9 6.5H14.5V13.5H3.5Z" fill="#eee"/></svg>
<svg style="left:136.5px;top:509px" width="18" height="18" viewBox="0 0 18 18"><rect x="4" y="7" width="7" height="7" fill="none" stroke="#ddd" stroke-width="1.1"/><path d="M6.5 7V4.5H13.5V11.5H11" fill="none" stroke="#ddd" stroke-width="1.1"/></svg>
<div style="left:760px;top:75.5px;width:17.5px;height:17.5px;background:#3d3d3d;border:1px solid #2c2c2c;border-radius:2px"></div>
<svg style="left:760px;top:75.5px" width="17" height="17" viewBox="0 0 17 17"><circle cx="7.5" cy="7.5" r="4.2" fill="none" stroke="#e2e2e2" stroke-width="1.4"/><path d="M10.5 10.5L14 14" stroke="#e2e2e2" stroke-width="2"/><path d="M6.8 5.5L7.8 5V10" fill="none" stroke="#e2e2e2" stroke-width="1.2"/></svg>
<div style="left:781px;top:79px;width:1px;height:10px;background:#5a5a5a"></div>
<div style="left:785px;top:75.5px;width:17.5px;height:17.5px;background:#3d3d3d;border:1px solid #2c2c2c;border-radius:2px"></div>
<svg style="left:785px;top:75.5px" width="17" height="17" viewBox="0 0 17 17"><circle cx="7.5" cy="7.5" r="4.2" fill="none" stroke="#e2e2e2" stroke-width="1.4"/><path d="M10.5 10.5L14 14" stroke="#e2e2e2" stroke-width="2"/><path d="M5.3 7.5H9.7M7.5 5.3V9.7" stroke="#e2e2e2" stroke-width="1.4"/></svg>
<div style="left:806px;top:75.5px;width:17.5px;height:17.5px;background:#3d3d3d;border:1px solid #2c2c2c;border-radius:2px"></div>
<svg style="left:806px;top:75.5px" width="17" height="17" viewBox="0 0 17 17"><rect x="3" y="3.5" width="11.5" height="10.5" fill="#c4c4c4"/><path d="M3.5 8.7L7 8.7M14 8.7L10.5 8.7M8.75 4V6.5M8.75 13.5V11" stroke="#3d3d3d" stroke-width="1.4"/><path d="M7.5 6.8L8.7 8.7L7.5 10.6ZM10 6.8L8.8 8.7L10 10.6Z" fill="#3d3d3d"/></svg>
<div style="left:826px;top:75.5px;width:17.5px;height:17.5px;background:#3d3d3d;border:1px solid #2c2c2c;border-radius:2px"></div>
<svg style="left:826px;top:75.5px" width="17" height="17" viewBox="0 0 17 17"><circle cx="7.5" cy="7.5" r="4.2" fill="none" stroke="#e2e2e2" stroke-width="1.4"/><path d="M10.5 10.5L14 14" stroke="#e2e2e2" stroke-width="2"/><path d="M5.3 7.5H9.7" stroke="#e2e2e2" stroke-width="1.4"/></svg>
<div style="left:847px;top:79px;width:1px;height:10px;background:#5a5a5a"></div>
<div style="left:851px;top:75.5px;width:17.5px;height:17.5px;background:#3d3d3d;border:1px solid #2c2c2c;border-radius:2px"></div>
<svg style="left:851px;top:75.5px" width="17" height="17" viewBox="0 0 17 17"><path d="M4 6A5.3 5.3 0 1 1 3.8 11" fill="none" stroke="#e2e2e2" stroke-width="1.5"/><path d="M2 4L5.5 4.5L4 8Z" fill="#e2e2e2"/><rect x="6" y="6.5" width="6" height="5" transform="rotate(-20 9 9)" fill="#e2e2e2"/></svg>
<div style="left:872px;top:75.5px;width:17.5px;height:17.5px;background:#1f1f1f;border:1px solid #3a3a3a;border-radius:2px"></div>
<svg style="left:872px;top:75.5px" width="17" height="17" viewBox="0 0 17 17"><rect x="5.5" y="6.5" width="6.5" height="4.5" fill="#e2e2e2"/><path d="M2.5 2.5L5.5 5.5M15 2.5L12 5.5M2.5 15L5.5 12M15 15L12 12" stroke="#e2e2e2" stroke-width="1.5"/></svg>
<div style="left:892px;top:75.5px;width:17.5px;height:17.5px;background:#3d3d3d;border:1px solid #2c2c2c;border-radius:2px"></div>
<svg style="left:892px;top:75.5px" width="17" height="17" viewBox="0 0 17 17"><path d="M13 6A5.3 5.3 0 1 0 13.2 11" fill="none" stroke="#e2e2e2" stroke-width="1.5"/><path d="M15 4L11.5 4.5L13 8Z" fill="#e2e2e2"/><rect x="5" y="6.5" width="6" height="5" transform="rotate(20 8 9)" fill="#e2e2e2"/></svg>
<div style="left:913px;top:79px;width:1px;height:10px;background:#5a5a5a"></div>
<div style="left:917px;top:75.5px;width:17.5px;height:17.5px;background:#3d3d3d;border:1px solid #2c2c2c;border-radius:2px"></div>
<svg style="left:917px;top:75.5px" width="17" height="17" viewBox="0 0 17 17"><path d="M3.5 8H7.5V14H3.5Z" fill="#e2e2e2"/><path d="M10 8H14V14H10Z" fill="none" stroke="#e2e2e2" stroke-width="1"/><path d="M4.5 6.5C5.5 3 11.5 3 12.5 6.5" fill="none" stroke="#e2e2e2" stroke-width="1.2"/><path d="M8.5 3V15" stroke="#e2e2e2" stroke-width="0.8"/></svg>
<div style="left:757px;top:126px;width:267px;height:3px;background:#1e1e1e"></div>
<div style="left:871px;top:96px;width:40px;height:30px;background:#fff"></div>
<div style="left:872px;top:96.5px;width:37px;height:29px;border:2px solid #e0201c"></div>
<svg style="left:871px;top:96px" width="40" height="30" viewBox="0 0 40 30"><circle cx="22" cy="13" r="6.2" fill="#fff" stroke="#111" stroke-width="1.4"/><circle cx="17.8" cy="14.5" r="2" fill="#f5c49a"/><circle cx="26.2" cy="14.5" r="2" fill="#f5c49a"/><circle cx="20" cy="12.5" r="0.9" fill="#000"/><circle cx="24" cy="12.5" r="0.9" fill="#000"/><path d="M17.5 18.3C19 21 25 21 26.5 18.3Z" fill="#d9332a" stroke="#111" stroke-width="0.8"/><path d="M30 25H35" stroke="#555" stroke-width="0.8"/><path d="M30 26.5H34" stroke="#777" stroke-width="0.6"/></svg>
<span class="t" style="left:761px;top:151.85px;font-size:9.3px;color:#c6c6c6;transform:scaleX(0.9112);transform-origin:0 0;">Độ trong</span>
<div style="left:829px;top:150.5px;width:155px;height:11.5px;background:linear-gradient(90deg,#88caf7,#6cb2e9 60%,#56a6e2)"></div>
<span class="t" style="left:989px;top:151.85px;font-size:9.3px;color:#c6c6c6;transform:scaleX(0.9102);transform-origin:0 0;">100 %</span>
<span class="t" style="left:761px;top:170.65px;font-size:9.3px;color:#c6c6c6;transform:scaleX(0.8961);transform-origin:0 0;">Pha trộn</span>
<div style="left:830px;top:167.5px;width:189px;height:15px;background:#474747;border-radius:2px"></div>
<span class="t" style="left:832.5px;top:170.65px;font-size:9.3px;color:#bdbdbd;transform:scaleX(0.8248);transform-origin:0 0;">Bình thường</span>
<svg style="left:1008px;top:172px" width="8" height="5" viewBox="0 0 8 5"><path d="M0.5 0.5H7.5L4 4.5Z" fill="#ccc"/></svg>
<div style="left:764px;top:190px;width:8.5px;height:8.5px;border:1px solid #bdbdbd"></div>
<span class="t" style="left:776px;top:189.95px;font-size:9.3px;color:#c6c6c6;transform:scaleX(0.8565);transform-origin:0 0;">Bảo vệ alpha</span>
<div style="left:852px;top:190px;width:8.5px;height:8.5px;border:1px solid #bdbdbd"></div>
<span class="t" style="left:863.5px;top:189.95px;font-size:9.3px;color:#c6c6c6;transform:scaleX(0.8792);transform-origin:0 0;">Xén bớt</span>
<div style="left:939px;top:190px;width:8.5px;height:8.5px;border:1px solid #bdbdbd"></div>
<span class="t" style="left:950.5px;top:189.95px;font-size:9.3px;color:#c6c6c6;transform:scaleX(0.8979);transform-origin:0 0;">Khóa</span>
<div style="left:757px;top:202px;width:267px;height:221px;background:#242424"></div>
<div style="left:759px;top:205px;width:248px;height:192px;background:#3a3a3a"></div>
<div style="left:759px;top:205px;width:248px;height:191.5px;overflow:hidden"><div style="left:0px;top:0.5px;width:248px;height:29px;background:#575757"></div><div style="left:0px;top:29.5px;width:248px;height:1px;background:#2f2f2f"></div><div style="left:3.5px;top:11.5px;width:7px;height:7px;background:radial-gradient(circle at 45% 40%,#e0e0e0,#bdbdbd);border-radius:50%"></div><svg style="left:24px;top:10.5px" width="30" height="9" viewBox="0 0 30 9"><path d="M1 2H6M1 4H8M2 6H7M9 2H13M10 4H12M9 6H14" stroke="#ddd" stroke-width="0.9"/><rect x="14" y="3" width="14" height="4" fill="#fff"/><path d="M14 2H27" stroke="#eee" stroke-width="0.8"/></svg><span class="t" style="left:64px;top:10.70px;font-size:9.8px;color:#ececec;transform:scaleX(0.9906);transform-origin:0 0;">jangjang28</span><div style="left:0px;top:30.5px;width:248px;height:29px;background:#575757"></div><div style="left:0px;top:59.5px;width:248px;height:1px;background:#2f2f2f"></div><div style="left:3.5px;top:41.5px;width:7px;height:7px;background:radial-gradient(circle at 45% 40%,#e0e0e0,#bdbdbd);border-radius:50%"></div><div style="left:26px;top:35.5px;width:25.7px;height:19.5px;background-color:#fff;background-image:linear-gradient(45deg,#e8e8e8 25%,transparent 25%,transparent 75%,#e8e8e8 75%),linear-gradient(45deg,#e8e8e8 25%,transparent 25%,transparent 75%,#e8e8e8 75%);background-size:6px 6px;background-position:0 0,3px 3px"></div><span class="t" style="left:64px;top:40.70px;font-size:9.8px;color:#ececec;transform:scaleX(0.9220);transform-origin:0 0;">Lớp7</span><div style="left:0px;top:60.5px;width:248px;height:29px;background:#575757"></div><div style="left:0px;top:89.5px;width:248px;height:1px;background:#2f2f2f"></div><div style="left:3.5px;top:71.5px;width:7px;height:7px;background:radial-gradient(circle at 45% 40%,#e0e0e0,#bdbdbd);border-radius:50%"></div><div style="left:26px;top:65.5px;width:25.7px;height:19.5px;background-color:#fff;background-image:linear-gradient(45deg,#e8e8e8 25%,transparent 25%,transparent 75%,#e8e8e8 75%),linear-gradient(45deg,#e8e8e8 25%,transparent 25%,transparent 75%,#e8e8e8 75%);background-size:6px 6px;background-position:0 0,3px 3px"></div><span class="t" style="left:64px;top:70.70px;font-size:9.8px;color:#ececec;transform:scaleX(0.9220);transform-origin:0 0;">Lớp6</span><div style="left:0px;top:90.5px;width:248px;height:29px;background:#575757"></div><div style="left:0px;top:119.5px;width:248px;height:1px;background:#2f2f2f"></div><div style="left:3.5px;top:101.5px;width:7px;height:7px;background:radial-gradient(circle at 45% 40%,#e0e0e0,#bdbdbd);border-radius:50%"></div><div style="left:26px;top:95.5px;width:25.7px;height:19.5px;background-color:#fff;background-image:linear-gradient(45deg,#e8e8e8 25%,transparent 25%,transparent 75%,#e8e8e8 75%),linear-gradient(45deg,#e8e8e8 25%,transparent 25%,transparent 75%,#e8e8e8 75%);background-size:6px 6px;background-position:0 0,3px 3px"></div><span class="t" style="left:64px;top:100.70px;font-size:9.8px;color:#ececec;transform:scaleX(0.9220);transform-origin:0 0;">Lớp4</span><div style="left:0px;top:120.5px;width:248px;height:29px;background:#575757"></div><div style="left:0px;top:149.5px;width:248px;height:1px;background:#2f2f2f"></div><div style="left:3.5px;top:131.5px;width:7px;height:7px;background:radial-gradient(circle at 45% 40%,#e0e0e0,#bdbdbd);border-radius:50%"></div><div style="left:26px;top:125.5px;width:25.7px;height:19.5px;background-color:#fff;background-image:linear-gradient(45deg,#e8e8e8 25%,transparent 25%,transparent 75%,#e8e8e8 75%),linear-gradient(45deg,#e8e8e8 25%,transparent 25%,transparent 75%,#e8e8e8 75%);background-size:6px 6px;background-position:0 0,3px 3px"></div><svg style="left:26px;top:125.5px" width="27" height="20" viewBox="0 0 27 20"><circle cx="13.5" cy="9.5" r="4" fill="none" stroke="#333" stroke-width="1.2"/><circle cx="12" cy="9" r="0.8" fill="#333"/><circle cx="15" cy="9" r="0.8" fill="#333"/><path d="M11 13.2H16" stroke="#333" stroke-width="1.2"/></svg><span class="t" style="left:64px;top:130.70px;font-size:9.8px;color:#ececec;transform:scaleX(0.9220);transform-origin:0 0;">Lớp1</span><div style="left:0px;top:150.5px;width:248px;height:29px;background:#575757"></div><div style="left:14px;top:150.5px;width:234px;height:29px;background:#4a9ad8"></div><div style="left:0px;top:179.5px;width:248px;height:1px;background:#2f2f2f"></div><div style="left:3.5px;top:161.5px;width:7px;height:7px;background:radial-gradient(circle at 45% 40%,#e0e0e0,#bdbdbd);border-radius:50%"></div><div style="left:26px;top:155.5px;width:25.7px;height:19.5px;background-color:#fff;background-image:linear-gradient(45deg,#e8e8e8 25%,transparent 25%,transparent 75%,#e8e8e8 75%),linear-gradient(45deg,#e8e8e8 25%,transparent 25%,transparent 75%,#e8e8e8 75%);background-size:6px 6px;background-position:0 0,3px 3px"></div><svg style="left:26px;top:155.5px" width="27" height="20" viewBox="0 0 27 20"><path d="M9 10.5C11 10 13 11 16 10.5" stroke="#f0a868" stroke-width="1"/></svg><span class="t" style="left:64px;top:160.70px;font-size:9.8px;color:#ffffff;font-weight:bold;transform:scaleX(0.9431);transform-origin:0 0;">Lớp5</span><svg style="left:230px;top:158.5px" width="14" height="14" viewBox="0 0 14 14"><circle cx="7" cy="7" r="3.8" fill="#fff"/><path d="M7 0.8V13.2M0.8 7H13.2M2.6 2.6L11.4 11.4M11.4 2.6L2.6 11.4" stroke="#fff" stroke-width="2.2"/><circle cx="7" cy="7" r="1.6" fill="#4a9ad8"/></svg><div style="left:0px;top:180.5px;width:248px;height:29px;background:#575757"></div><div style="left:0px;top:209.5px;width:248px;height:1px;background:#2f2f2f"></div><div style="left:26px;top:185.5px;width:25.7px;height:19.5px;background-color:#fff;background-image:linear-gradient(45deg,#e8e8e8 25%,transparent 25%,transparent 75%,#e8e8e8 75%),linear-gradient(45deg,#e8e8e8 25%,transparent 25%,transparent 75%,#e8e8e8 75%);background-size:6px 6px;background-position:0 0,3px 3px"></div></div>
<div style="left:1008px;top:205px;width:14px;height:191px;background:#252525"></div>
<svg style="left:1008px;top:205px" width="14" height="191" viewBox="0 0 14 191"><path d="M7 1L3.8 5H10.2Z" fill="#c8c8c8"/><rect x="1.5" y="8.5" width="11" height="158.5" rx="5" fill="#6a6a6a"/><path d="M7 189L3.8 185H10.2Z" fill="#c8c8c8"/></svg>
<div style="left:757px;top:397px;width:267px;height:23px;background:#202020"></div>
<div style="left:761px;top:399px;width:17.5px;height:17.5px;background:#3d3d3d;border:1px solid #2c2c2c;border-radius:2px"></div>
<div style="left:781.5px;top:399px;width:17.5px;height:17.5px;background:#3d3d3d;border:1px solid #2c2c2c;border-radius:2px"></div>
<div style="left:802px;top:399px;width:17.5px;height:17.5px;background:#3d3d3d;border:1px solid #2c2c2c;border-radius:2px"></div>
<div style="left:822px;top:399px;width:22.5px;height:17.5px;background:#3d3d3d;border:1px solid #2c2c2c;border-radius:2px"></div>
<div style="left:848px;top:399px;width:17.5px;height:17.5px;background:#3d3d3d;border:1px solid #2c2c2c;border-radius:2px"></div>
<div style="left:873px;top:399px;width:17.5px;height:17.5px;background:#3d3d3d;border:1px solid #2c2c2c;border-radius:2px"></div>
<div style="left:893px;top:399px;width:17.5px;height:17.5px;background:#3d3d3d;border:1px solid #2c2c2c;border-radius:2px"></div>
<div style="left:919px;top:399px;width:17.5px;height:17.5px;background:#3d3d3d;border:1px solid #2c2c2c;border-radius:2px"></div>
<div style="left:869px;top:403px;width:1px;height:10px;background:#5a5a5a"></div>
<div style="left:914px;top:403px;width:1px;height:10px;background:#5a5a5a"></div>
<svg style="left:761px;top:399px" width="17" height="17" viewBox="0 0 17 17"><path d="M5 3.5H9.5L12 6V13.5H5Z" fill="none" stroke="#ddd" stroke-width="1.1"/></svg>
<svg style="left:781.5px;top:399px" width="17" height="17" viewBox="0 0 17 17"><path d="M5 3.5H9.5L12 6V13.5H5Z" fill="none" stroke="#ddd" stroke-width="1.1"/><rect x="7" y="8" width="3" height="4" fill="none" stroke="#ddd" stroke-width="0.8"/></svg>
<svg style="left:802px;top:399px" width="17" height="17" viewBox="0 0 17 17"><path d="M5 3.5H9.5L12 6V13.5H5Z" fill="none" stroke="#ddd" stroke-width="1.1"/><path d="M8.5 12.5V7.5M7 9L8.5 7.5L10 9" fill="none" stroke="#ddd" stroke-width="0.9"/></svg>
<svg style="left:822px;top:399px" width="23" height="17" viewBox="0 0 23 17"><path d="M4 3.5H8.5L11 6V13.5H4Z" fill="none" stroke="#ddd" stroke-width="1.1"/><path d="M9 11.5H13.5M11.2 9.2V13.8" stroke="#eee" stroke-width="1.6"/><path d="M15.5 8H20L17.75 10.5Z" fill="#eee"/></svg>
<svg style="left:848px;top:399px" width="17" height="17" viewBox="0 0 17 17"><path d="M3 5H7.5L8.5 6.5H14V13H3Z" fill="#eee"/></svg>
<svg style="left:873px;top:399px" width="17" height="17" viewBox="0 0 17 17"><rect x="4" y="7" width="7" height="6.5" fill="none" stroke="#ddd" stroke-width="1.1"/><path d="M6.5 7V4.5H13V11H11" fill="none" stroke="#ddd" stroke-width="1.1"/></svg>
<svg style="left:893px;top:399px" width="17" height="17" viewBox="0 0 17 17"><rect x="3.5" y="4" width="4" height="3.5" fill="#ddd"/><rect x="3.5" y="10" width="4" height="3.5" fill="#ddd"/><rect x="9.5" y="7" width="4.5" height="3.5" fill="#eee"/><path d="M7.5 5.8H8.5V11.8H7.5" fill="none" stroke="#ddd" stroke-width="0.8"/></svg>
<svg style="left:919px;top:399px" width="17" height="17" viewBox="0 0 17 17"><path d="M4 5.5H13M7 5.5V4H10V5.5" fill="none" stroke="#eee" stroke-width="1.1"/><path d="M5 6.5H12V13.5H5Z" fill="none" stroke="#eee" stroke-width="1.1"/><path d="M7 8V12M8.5 8V12M10 8V12" stroke="#eee" stroke-width="0.8"/></svg>
<div style="left:760px;top:443px;width:17px;height:17.5px;background:#555;border:1px solid #3a3a3a;border-radius:3px"></div>
<svg style="left:760px;top:443px" width="17" height="17" viewBox="0 0 17 17"><path d="M4 10A3 3 0 0 1 4.5 4.5A4 4 0 0 1 12 4.5A2.8 2.8 0 0 1 12.8 10Z" fill="#eee"/><path d="M8.5 7.5V14.5M5.8 11.8L8.5 14.5L11.2 11.8" fill="none" stroke="#3d3d3d" stroke-width="2.6"/><path d="M8.5 7.5V14.5M5.8 11.8L8.5 14.5L11.2 11.8" fill="none" stroke="#eee" stroke-width="1.4"/></svg>
<div style="left:780px;top:443px;width:17.5px;height:17.5px;background:#555;border:1px solid #3a3a3a;border-radius:3px"></div>
<svg style="left:780px;top:443px" width="17" height="17" viewBox="0 0 17 17"><path d="M3 5H7L8 6.5H13V13H3Z" fill="#ccc"/><path d="M4.5 8.5H14.5L13 13H3Z" fill="#e8e8e8"/></svg>
<div style="left:800px;top:443px;width:17.5px;height:17.5px;background:#1f1f1f;border:1px solid #3a3a3a;border-radius:2px"></div>
<svg style="left:800px;top:443px" width="17" height="17" viewBox="0 0 17 17"><path d="M5.5 5.5L11.5 11.5M11.5 5.5L5.5 11.5" stroke="#eee" stroke-width="1.6"/></svg>
<div style="left:822px;top:447px;width:1px;height:10px;background:#5a5a5a"></div>
<div style="left:826px;top:443px;width:17.5px;height:17.5px;background:#1f1f1f;border:1px solid #3a3a3a;border-radius:2px"></div>
<svg style="left:826px;top:443px" width="17" height="17" viewBox="0 0 17 17"><circle cx="7.5" cy="7.5" r="4.2" fill="none" stroke="#e2e2e2" stroke-width="1.4"/><path d="M10.5 10.5L14 14" stroke="#e2e2e2" stroke-width="2"/><path d="M5.3 7.5H9.7M7.5 5.3V9.7" stroke="#e2e2e2" stroke-width="1.4"/></svg>
<div style="left:846px;top:443px;width:17.5px;height:17.5px;background:#1f1f1f;border:1px solid #3a3a3a;border-radius:2px"></div>
<svg style="left:846px;top:443px" width="17" height="17" viewBox="0 0 17 17"><rect x="3" y="3.5" width="11" height="10" fill="none" stroke="#ddd" stroke-width="1"/><path d="M4.5 8.5H7.5M12.5 8.5H9.5M6 6.5L4.5 8.5L6 10.5M11 6.5L12.5 8.5L11 10.5M8.5 5V6.5M8.5 12V10.5" fill="none" stroke="#ddd" stroke-width="1.1"/></svg>
<div style="left:866px;top:443px;width:17.5px;height:17.5px;background:#1f1f1f;border:1px solid #3a3a3a;border-radius:2px"></div>
<svg style="left:866px;top:443px" width="17" height="17" viewBox="0 0 17 17"><circle cx="7.5" cy="7.5" r="4.2" fill="none" stroke="#e2e2e2" stroke-width="1.4"/><path d="M10.5 10.5L14 14" stroke="#e2e2e2" stroke-width="2"/><path d="M5.3 7.5H9.7" stroke="#e2e2e2" stroke-width="1.4"/></svg>
<div style="left:888px;top:447px;width:1px;height:10px;background:#5a5a5a"></div>
<div style="left:892px;top:443px;width:17.5px;height:17.5px;background:#1f1f1f;border:1px solid #3a3a3a;border-radius:2px"></div>
<svg style="left:892px;top:443px" width="17" height="17" viewBox="0 0 17 17"><path d="M3.5 14L4 11.5L10.5 5L12.5 7L6 13.5Z" fill="none" stroke="#eee" stroke-width="1.2"/><path d="M10 4.5L12 2.5L15 5.5L13 7.5Z" fill="#eee"/></svg>
<div style="left:912px;top:443px;width:17.5px;height:17.5px;background:#4a9ad8;border:1px solid #3a7ab0;border-radius:2px"></div>
<svg style="left:912px;top:443px" width="17" height="17" viewBox="0 0 17 17"><path d="M5.5 15C4 13.5 3 11 3.3 10C3.7 9 4.8 10.3 5.5 11.3V5C5.5 4 7 4 7 5V9V3.8C7 2.8 8.5 2.8 8.5 3.8V9V4.3C8.5 3.3 10 3.3 10 4.3V9.5V5.8C10 4.8 11.5 4.8 11.5 5.8V11.5C11.5 13.5 11 14.5 10 15Z" fill="#fff"/></svg>
<div style="left:933px;top:447px;width:1px;height:10px;background:#5a5a5a"></div>
<div style="left:938px;top:443px;width:17.5px;height:17.5px;background:#1f1f1f;border:1px solid #3a3a3a;border-radius:2px"></div>
<svg style="left:938px;top:443px" width="17" height="17" viewBox="0 0 17 17"><path d="M4 6A5.3 5.3 0 1 1 3.8 11" fill="none" stroke="#e2e2e2" stroke-width="1.5"/><path d="M2 4L5.5 4.5L4 8Z" fill="#e2e2e2"/><rect x="6" y="6.5" width="6" height="5" transform="rotate(-20 9 9)" fill="#e2e2e2"/></svg>
<div style="left:958px;top:443px;width:17.5px;height:17.5px;background:#1f1f1f;border:1px solid #3a3a3a;border-radius:2px"></div>
<svg style="left:958px;top:443px" width="17" height="17" viewBox="0 0 17 17"><rect x="5.5" y="6.5" width="6.5" height="4.5" fill="#e2e2e2"/><path d="M2.5 2.5L5.5 5.5M15 2.5L12 5.5M2.5 15L5.5 12M15 15L12 12" stroke="#e2e2e2" stroke-width="1.5"/></svg>
<div style="left:978px;top:443px;width:17.5px;height:17.5px;background:#1f1f1f;border:1px solid #3a3a3a;border-radius:2px"></div>
<svg style="left:978px;top:443px" width="17" height="17" viewBox="0 0 17 17"><path d="M13 6A5.3 5.3 0 1 0 13.2 11" fill="none" stroke="#e2e2e2" stroke-width="1.5"/><path d="M15 4L11.5 4.5L13 8Z" fill="#e2e2e2"/><rect x="5" y="6.5" width="6" height="5" transform="rotate(20 8 9)" fill="#e2e2e2"/></svg>
<div style="left:999px;top:447px;width:1px;height:10px;background:#5a5a5a"></div>
<div style="left:1004px;top:443px;width:17.5px;height:17.5px;background:#1f1f1f;border:1px solid #3a3a3a;border-radius:2px"></div>
<svg style="left:1004px;top:443px" width="17" height="17" viewBox="0 0 17 17"><path d="M3.5 8H7.5V14H3.5Z" fill="#e2e2e2"/><path d="M10 8H14V14H10Z" fill="none" stroke="#e2e2e2" stroke-width="1"/><path d="M4.5 6.5C5.5 3 11.5 3 12.5 6.5" fill="none" stroke="#e2e2e2" stroke-width="1.2"/><path d="M8.5 3V15" stroke="#e2e2e2" stroke-width="0.8"/></svg>
<div style="left:757px;top:463px;width:267px;height:5.5px;background:#fdfdfd"></div>
<div style="left:757px;top:465px;width:267px;height:1.5px;background:repeating-linear-gradient(90deg,#fdfdfd 0 4px,#e2e2e2 4px 6px)"></div>
<div style="left:757px;top:468.5px;width:267px;height:2.5px;background:#1e1e1e"></div>
<div style="left:757px;top:487px;width:267px;height:45px;background:#2b2b2b"></div>
<div style="left:757px;top:488px;width:251px;height:43px;background:#484848"></div>
<div style="left:758.0px;top:488px;width:28.6px;height:36.6px;background:#595959"></div>
<div style="left:758.0px;top:525.6px;width:28.6px;height:6px;background:#595959"></div>
<div style="left:771.8px;top:502.0px;width:1.0px;height:1.0px;background:#5e5e5e;border-radius:50%"></div>
<span class="t" style="left:769.9366015625px;top:515.75px;font-size:8.5px;color:#e8e8e8;">1</span>
<div style="left:787.9px;top:488px;width:28.6px;height:36.6px;background:#595959"></div>
<div style="left:787.9px;top:525.6px;width:28.6px;height:6px;background:#595959"></div>
<div style="left:801.4999999999999px;top:501.8px;width:1.4px;height:1.4px;background:#808080;border-radius:50%"></div>
<span class="t" style="left:796.2924999999999px;top:515.75px;font-size:8.5px;color:#e8e8e8;">1.5</span>
<div style="left:817.8px;top:488px;width:28.6px;height:36.6px;background:#595959"></div>
<div style="left:817.8px;top:525.6px;width:28.6px;height:6px;background:#595959"></div>
<div style="left:831.0999999999999px;top:501.5px;width:2.0px;height:2.0px;background:#b0b0b0;border-radius:50%"></div>
<span class="t" style="left:829.7366015624999px;top:515.75px;font-size:8.5px;color:#e8e8e8;">2</span>
<div style="left:847.7px;top:488px;width:28.6px;height:36.6px;background:#595959"></div>
<div style="left:847.7px;top:525.6px;width:28.6px;height:6px;background:#595959"></div>
<div style="left:860.7px;top:501.2px;width:2.6px;height:2.6px;background:#f0f0f0;border-radius:50%"></div>
<span class="t" style="left:859.6366015625px;top:515.75px;font-size:8.5px;color:#e8e8e8;">3</span>
<div style="left:877.6px;top:488px;width:28.6px;height:36.6px;background:#595959"></div>
<div style="left:877.6px;top:525.6px;width:28.6px;height:6px;background:#595959"></div>
<div style="left:890.3px;top:500.9px;width:3.2px;height:3.2px;background:#f4f4f4;border-radius:50%"></div>
<span class="t" style="left:889.5366015625px;top:515.75px;font-size:8.5px;color:#e8e8e8;">4</span>
<div style="left:907.5px;top:488px;width:28.6px;height:36.6px;background:#595959"></div>
<div style="left:907.5px;top:525.6px;width:28.6px;height:6px;background:#595959"></div>
<div style="left:919.8px;top:500.5px;width:4.0px;height:4.0px;background:#f6f6f6;border-radius:50%"></div>
<span class="t" style="left:919.4366015625px;top:515.75px;font-size:8.5px;color:#e8e8e8;">5</span>
<div style="left:937.4px;top:488px;width:28.6px;height:36.6px;background:#595959"></div>
<div style="left:937.4px;top:525.6px;width:28.6px;height:6px;background:#595959"></div>
<div style="left:948.9px;top:499.7px;width:5.6px;height:5.6px;background:#f6f6f6;border-radius:50%"></div>
<span class="t" style="left:949.3366015624999px;top:515.75px;font-size:8.5px;color:#e8e8e8;">7</span>
<div style="left:967.3px;top:488px;width:28.6px;height:36.6px;background:#595959"></div>
<div style="left:967.3px;top:525.6px;width:28.6px;height:6px;background:#595959"></div>
<div style="left:977.8px;top:498.7px;width:7.6px;height:7.6px;background:#f6f6f6;border-radius:50%"></div>
<span class="t" style="left:976.8732031249999px;top:515.75px;font-size:8.5px;color:#e8e8e8;">10</span>
<div style="left:997px;top:488px;width:11px;height:43px;background:#555"></div>
<div style="left:1008px;top:488px;width:16px;height:43px;background:#2a2a2a"></div>
<svg style="left:1009px;top:488px" width="14" height="43" viewBox="0 0 14 43"><path d="M7 2L3.8 6.5H10.2Z" fill="#aaa"/><rect x="1" y="8" width="12" height="10" rx="4" fill="#6a6a6a"/><rect x="1" y="19" width="12" height="18" fill="#353535"/><path d="M7 42L3.8 37.5H10.2Z" fill="#aaa"/></svg>
<svg style="left:178px;top:81px" width="560" height="434" viewBox="178 81 560 434"><defs><filter id="soft" x="-20%" y="-20%" width="140%" height="140%"><feGaussianBlur stdDeviation="1.6"/></filter><filter id="bsoft" x="-10%" y="-10%" width="120%" height="120%"><feGaussianBlur stdDeviation="1.1"/></filter><filter id="glow" x="-100%" y="-100%" width="300%" height="300%"><feGaussianBlur stdDeviation="4"/></filter><filter id="wc" x="-10%" y="-10%" width="120%" height="120%"><feGaussianBlur stdDeviation="3"/></filter><clipPath id="shirtclip"><path d="M436 352C470 360 510 356 541 348C546 362 545 378 535 385C505 391 465 391 446 385C437 378 435 365 436 352Z"/></clipPath><clipPath id="headclip"><path d="M382 290A108 103 0 0 1 598 290C598 312 590 325 575 335C540 353 515 357 487 358C460 357 430 351 405 336C390 325 382 310 382 290Z"/></clipPath></defs><circle cx="492" cy="177" r="11" fill="#6fe05c" opacity="0.8" filter="url(#glow)"/><path d="M382 290A108 103 0 0 1 598 290C598 312 590 325 575 335C540 353 515 357 487 358C460 357 430 351 405 336C390 325 382 310 382 290Z" fill="#fff"/><g clip-path="url(#headclip)"><circle cx="417" cy="293.5" r="29.5" fill="#f9bc8c"/><circle cx="555" cy="293" r="30" fill="#f9bc8c"/></g><path d="M388 290A102 97 0 0 1 592 290C592 310 585 321 571 330C538 347 514 351 487 352C461 351 433 345 409 331C395 322 388 308 388 290Z" fill="none" stroke="#000" stroke-width="11.5"/><ellipse cx="493" cy="190" rx="14" ry="5" fill="#2a9a2a" opacity="0.18" filter="url(#soft)"/><path d="M490.5 187C490.5 184.5 491.5 183 492 181" stroke="#2faa2f" stroke-width="1.6" fill="none"/><path d="M492 181C487 178.5 486.3 172.5 490 172.3C493.8 172.2 494 178 492 181Z" fill="none" stroke="#2faa2f" stroke-width="1.6"/><path d="M492 181C494.5 176.5 502.5 175 503.5 178.8C504.3 182.8 497 183.3 492 181Z" fill="none" stroke="#2faa2f" stroke-width="1.6"/><circle cx="439.5" cy="268.3" r="16" fill="#000"/><circle cx="515" cy="270" r="16" fill="#000"/><path d="M451 258L456 252M527 259L531 253" stroke="#000" stroke-width="2.6" stroke-linecap="round"/><path d="M404 287.5C409 286.5 414 286 417 286.5C415 289 412 291 411 292.5C415 293 419 294 421 295.5C417 298 412 300 408.5 302" fill="none" stroke="#fff1e6" stroke-width="1.3" stroke-linecap="round" stroke-linejoin="round"/><path d="M546 285.5C551 284.5 557 284 562 284C559 286.5 556 288.5 553.5 290C558 291 563 292 566 293.5C561 296 555 298.5 549 300.5" fill="none" stroke="#fff1e6" stroke-width="1.3" stroke-linecap="round" stroke-linejoin="round"/><path d="M463 307.5C466 319 486 320 490.5 307.5" fill="none" stroke="#000" stroke-width="3" stroke-linecap="round"/><path d="M548 340C560 333 574 332 577 342C580 352 570 360 552 360" fill="none" stroke="#000" stroke-width="10"/><path d="M550 343C556 342 563 343 568 346C566 350 560 352 551 352Z" fill="#d9412f"/><path d="M560 344.5C564 345 568 346 568.5 348C566 351 562 352 559 352Z" fill="#fff"/><path d="M428 348C418 346 412 352 414 358C416 364 424 366 430 362" fill="none" stroke="#000" stroke-width="8"/><path d="M413.5 351C416 350 419 350.5 420 351V357C417 357 414 356 413.5 355Z" fill="#fff"/><path d="M419.5 350.5L427 350V358L419.5 357Z" fill="#d9412f"/><path d="M430 352C428 368 430 383 445 392C470 399 510 399 537 392C549 382 550 365 546 345" fill="#000" stroke="#000" stroke-width="9" stroke-linejoin="round"/><path d="M436 352C470 360 510 356 541 348C546 362 545 378 535 385C505 391 465 391 446 385C437 378 435 365 436 352Z" fill="#db3c26"/><g clip-path="url(#shirtclip)" filter="url(#wc)"><circle cx="450" cy="372" r="7" fill="#ec8a74" opacity="0.75"/><circle cx="478" cy="381" r="7" fill="#ea8470" opacity="0.7"/><circle cx="522" cy="364" r="8" fill="#ec8a74" opacity="0.65"/><circle cx="500" cy="370" r="6" fill="#d42e14" opacity="0.7"/><circle cx="532" cy="379" r="6" fill="#e87c66" opacity="0.6"/><circle cx="464" cy="361" r="5" fill="#ec8a74" opacity="0.55"/><circle cx="496" cy="385" r="5" fill="#ee9a84" opacity="0.6"/></g><path d="M409 331C433 344 461 350 487 351C514 350 538 346 571 330" fill="none" stroke="#000" stroke-width="11.5"/><g stroke="#b06a35" stroke-width="2.3" fill="none" stroke-linecap="round"><path d="M368.7 303L386.9 324.7L397.3 340.4L409.5 356L415.6 384.7" stroke-width="2.6"/><path d="M356 309.5L374.7 314.3" stroke-width="1.8"/><path d="M362 324L386.9 323" stroke-width="1.8"/><path d="M377.4 307.4L383.4 319.5" stroke-width="1.6"/><path d="M366 343.5L395.6 339.5" stroke-width="1.8"/><path d="M375 353.5L385.2 340.4" stroke-width="1.6"/><path d="M390 354.8L409.5 361.2" stroke-width="1.6"/><path d="M399 364.5L411.2 363" stroke-width="1.4"/><path d="M389.5 313.5L390.4 323.9" stroke-width="1.4"/><path d="M399.8 323.1L393 331" stroke-width="1.4"/><path d="M409 336.2L406 346" stroke-width="1.4"/></g><g filter="url(#bsoft)"><circle cx="351" cy="307" r="4.5" fill="#f4b8d4" opacity="0.8"/><circle cx="357" cy="310" r="3.5" fill="#f4b8d4" opacity="0.8"/><circle cx="362" cy="305" r="3" fill="#f4b8d4" opacity="0.8"/><circle cx="372" cy="311" r="3" fill="#f4b8d4" opacity="0.8"/><circle cx="358" cy="324" r="4.5" fill="#f4b8d4" opacity="0.8"/><circle cx="366" cy="320" r="3" fill="#f4b8d4" opacity="0.8"/><circle cx="370" cy="327" r="3" fill="#f4b8d4" opacity="0.8"/><circle cx="383" cy="315" r="3" fill="#f4b8d4" opacity="0.8"/><circle cx="394" cy="326" r="4" fill="#f4b8d4" opacity="0.8"/><circle cx="388" cy="318" r="3" fill="#f4b8d4" opacity="0.8"/><circle cx="400" cy="322" r="3" fill="#f4b8d4" opacity="0.8"/><circle cx="360" cy="344" r="4.5" fill="#f4b8d4" opacity="0.8"/><circle cx="368" cy="340" r="3" fill="#f4b8d4" opacity="0.8"/><circle cx="372" cy="350" r="3" fill="#f4b8d4" opacity="0.8"/><circle cx="380" cy="346" r="3" fill="#f4b8d4" opacity="0.8"/><circle cx="394" cy="345" r="3.5" fill="#f4b8d4" opacity="0.8"/><circle cx="404" cy="340" r="3.5" fill="#f4b8d4" opacity="0.8"/><circle cx="408" cy="350" r="3" fill="#f4b8d4" opacity="0.8"/><circle cx="383" cy="356" r="4" fill="#f4b8d4" opacity="0.8"/><circle cx="398" cy="358" r="3.5" fill="#f4b8d4" opacity="0.8"/><circle cx="404" cy="366" r="3.5" fill="#f4b8d4" opacity="0.8"/><circle cx="412" cy="372" r="3" fill="#f4b8d4" opacity="0.8"/><circle cx="391" cy="336" r="3" fill="#f4b8d4" opacity="0.8"/><circle cx="376" cy="332" r="2.5" fill="#f4b8d4" opacity="0.8"/></g><circle cx="351.8" cy="306.5" r="2.0" fill="#f7d2e4" opacity="0.9"/><circle cx="362.8" cy="304.5" r="1.4" fill="#f7d2e4" opacity="0.9"/><circle cx="358.8" cy="323.5" r="2.0" fill="#f7d2e4" opacity="0.9"/><circle cx="370.8" cy="326.5" r="1.4" fill="#f7d2e4" opacity="0.9"/><circle cx="394.8" cy="325.5" r="1.8" fill="#f7d2e4" opacity="0.9"/><circle cx="400.8" cy="321.5" r="1.4" fill="#f7d2e4" opacity="0.9"/><circle cx="368.8" cy="339.5" r="1.4" fill="#f7d2e4" opacity="0.9"/><circle cx="380.8" cy="345.5" r="1.4" fill="#f7d2e4" opacity="0.9"/><circle cx="404.8" cy="339.5" r="1.6" fill="#f7d2e4" opacity="0.9"/><circle cx="383.8" cy="355.5" r="1.8" fill="#f7d2e4" opacity="0.9"/><circle cx="404.8" cy="365.5" r="1.6" fill="#f7d2e4" opacity="0.9"/><circle cx="391.8" cy="335.5" r="1.4" fill="#f7d2e4" opacity="0.9"/><g stroke="#b06a35" fill="none" stroke-linecap="round" opacity="0.75"><path d="M386.9 324.7L397.3 340.4L409.5 356L415.6 384.7" stroke-width="2.4"/></g></svg>
<svg style="left:580px;top:425px" width="140" height="50" viewBox="580 425 140 50"><g fill="none" stroke="#151515" stroke-width="2.6" stroke-linecap="round" stroke-linejoin="round"><path d="M594.6 436.6L601.2 436.1M598.8 436.5C598.5 440 598.2 444 597.6 447C596.8 449.6 593 449.5 590.6 446.6"/><path d="M602.4 449L608.2 436.2L611.7 449M604.8 444.2L611.2 443.7"/><path d="M615.4 449L616.6 436.6L623.4 448.6L623.9 436.1"/><path d="M636.2 437.8C633 435.5 628.5 437.5 628 442.8C627.6 447.5 631 449.8 634.5 448.6C636.6 447.8 637.6 446.2 637.4 443.3M633.4 443.4L638.8 443"/><path d="M646.3 436.6L652.2 436.1M649.5 436.5C649.3 440 649.2 444 648.7 447C648 449.6 644.2 449.5 641.8 446.6"/><path d="M653.1 449L659.2 436.2L662.6 448.7M655.4 444.2L662.2 443.7"/><path d="M666.4 448.7L667.2 436.2L673.7 448.6L674.8 435.8"/><path d="M687.6 437.5C684.5 435.3 679.5 437.3 678.8 442.8C678.3 447.5 681.8 449.6 685 448.5C687.2 447.7 688 446.1 687.6 443.3M683.6 443.4L689.8 442.7"/><path d="M691.7 438.5C692.5 436.4 694.5 435.6 696.2 435.7C699 435.9 700.4 438 699.6 440.3C698.5 443 694.5 445.5 692.4 448L700.5 447.6"/><path d="M708.2 436C705.5 436 704.6 438 705.2 439.6C706 441.3 709.5 441.6 710.8 443.6C712 445.8 710.5 448.8 707.3 448.9C704 449 702.8 446.3 703.6 444.4C704.5 442.2 708.5 441.6 710.3 439.7C711.6 438 710.8 436 708.2 436"/><path d="M592.2 455.6L591.1 469M600.2 455.3L599.8 469M591.3 462.9L600.1 462.1"/><path d="M604.7 456.4L604 468.6M603.8 456.5C609 455.8 612.8 458.2 612.8 462.3C612.7 466.6 608.5 468.8 604 468.6"/><path d="M616.2 458.3C617 456.3 618.8 455.4 620.5 455.6C623.3 455.8 624.7 458 623.9 460.3C622.8 463 618 465.5 615.5 468.2L624.6 467.4"/><path d="M633.4 455.7L627.6 463.6L636.9 463.2M633.4 456L632.6 469"/><path d="M639.5 456.4L646.8 456L641.4 469"/></g></svg>
<div style="left:411px;top:546px;width:42.5px;height:30px;background:rgba(255,255,255,0.32);border:1px solid rgba(255,255,255,0.55)"></div>
<div style="left:457px;top:546px;width:43.5px;height:30px;background:rgba(255,255,255,0.14);border:1px solid rgba(255,255,255,0.22)"></div>
<div style="left:503.5px;top:546px;width:43.0px;height:30px;background:rgba(255,255,255,0.14);border:1px solid rgba(255,255,255,0.22)"></div>
<div style="left:549.5px;top:546px;width:44.5px;height:30px;background:rgba(255,255,255,0.14);border:1px solid rgba(255,255,255,0.22)"></div>
<svg style="left:8px;top:550px" width="22" height="21" viewBox="0 0 22 21"><path d="M1 3.2L9.5 2V10H1ZM10.8 1.8L21 0.5V10H10.8ZM1 11.3H9.5V19.3L1 18.1ZM10.8 11.3H21V20.8L10.8 19.5Z" fill="#f2f4f4"/></svg>
<svg style="left:51px;top:551px" width="18" height="21" viewBox="0 0 18 21"><path d="M1 1H12.5L17 5.5V20H1Z" fill="#f4f4f2"/><path d="M12.5 1V5.5H17" fill="#d9d9d6"/></svg>
<svg style="left:95px;top:549px" width="24" height="24" viewBox="0 0 24 24"><ellipse cx="12" cy="12" rx="10.8" ry="11.3" fill="#e0131f"/><ellipse cx="12" cy="12" rx="4.8" ry="8.2" fill="#7e9da0"/><ellipse cx="12" cy="12" rx="4.8" ry="8.2" fill="none" stroke="#a80c14" stroke-width="1"/></svg>
<svg style="left:141px;top:547px" width="26" height="26" viewBox="0 0 26 26"><path d="M20.2 16.5A7.6 7.6 0 1 1 20.8 13H9.2" fill="none" stroke="#3fa9e6" stroke-width="3.4"/><path d="M9 13H19" stroke="#3fa9e6" stroke-width="2.4"/><path d="M3.5 23.5C0.5 21 5 10.5 14.5 5C20 2 24.5 1.5 24.5 4C24.5 6 23 8.5 21 10.5" fill="none" stroke="#f2c42c" stroke-width="2"/></svg>
<svg style="left:188px;top:550px" width="23" height="22" viewBox="0 0 23 22"><rect x="0.5" y="0.5" width="22" height="21" fill="#1f8f3f"/><path d="M6 8H17V17H6Z" fill="#fff"/><path d="M9 8V6.5C9 4.5 14 4.5 14 6.5V8" fill="none" stroke="#fff" stroke-width="1.2"/><path d="M7.5 10.5H11V12.5H7.5ZM12 10.5H15.5V12.5H12ZM7.5 13.5H11V15.5H7.5ZM12 13.5H15.5V15.5H12Z" fill="#1f8f3f"/></svg>
<svg style="left:235px;top:549px" width="23" height="23" viewBox="0 0 23 23"><circle cx="11" cy="12.5" r="9.5" fill="#8ccf4e"/><circle cx="11" cy="12.5" r="7" fill="#e6f3d6"/><circle cx="11" cy="12.5" r="4.5" fill="#8ccf4e"/><circle cx="11" cy="12.5" r="2.2" fill="#dff0c9"/><path d="M15 3L16 0.5M18 5L20.5 3M19.5 8L22 7.5" stroke="#e2422c" stroke-width="1.6"/><path d="M12 3A9.5 9.5 0 0 1 20.5 11.5L15.5 12Z" fill="#7e9da0" opacity="0.6"/></svg>
<svg style="left:280px;top:551px" width="25" height="22" viewBox="0 0 25 22"><path d="M1 2.5H9L11 4.5H23V19H1Z" fill="#e9c85a"/><path d="M1 6H24V19H1Z" fill="#f3dc85"/><path d="M3 3.5H21V6H3Z" fill="#f6f2e4" opacity="0.8"/><path d="M5 13H20V19H17V15.5H8V19H5Z" fill="#3f9fdc"/><path d="M8 15.5H17V19H8Z" fill="#8fd0f2"/></svg>
<svg style="left:328px;top:549.5px" width="23" height="23" viewBox="0 0 23 23"><path d="M11.5 11.5L1.97 6A11 11 0 0 1 21.03 6Z" fill="#e33b2e"/><path d="M11.5 11.5L21.03 6A11 11 0 0 1 11.5 22.5Z" fill="#f7c531"/><path d="M11.5 11.5L11.5 22.5A11 11 0 0 1 1.97 6Z" fill="#2fa350"/><circle cx="11.5" cy="11.5" r="5.3" fill="#fff"/><circle cx="11.5" cy="11.5" r="4.1" fill="#4a86e6"/></svg>
<svg style="left:373px;top:548px" width="25" height="26" viewBox="0 0 25 26"><rect x="1" y="1.5" width="23" height="22" rx="7" fill="#fff" stroke="#2f80e8" stroke-width="1.6"/><path d="M2 19C3 22 4 24 7 24.5C5.5 23 5 21.5 5 20Z" fill="#2f80e8"/><text x="12.5" y="15.5" font-family="Liberation Sans" font-size="8" font-weight="bold" fill="#2f80e8" text-anchor="middle">Zalo</text></svg>
<svg style="left:421px;top:548.5px" width="23" height="24" viewBox="0 0 23 24"><defs><linearGradient id="dg2" x1="0" y1="0" x2="1" y2="1"><stop offset="0" stop-color="#22d0d8"/><stop offset="0.6" stop-color="#1fb08a"/><stop offset="1" stop-color="#3cb02a"/></linearGradient></defs><rect x="0.5" y="0.5" width="22.5" height="23" rx="5" fill="#f4f3f7"/><circle cx="12" cy="13" r="7" fill="url(#dg2)"/><path d="M5 12C5.5 8 8 5 13 3.5C12.5 6 12 8.5 11.5 11C9 11 7 11.3 5 12Z" fill="#e8332a"/><path d="M9 6C10.5 4.5 12 4 13 3.5C12.7 5 12.4 6.5 12 8C11 7 10 6.5 9 6Z" fill="#f29a2e"/></svg></svg>
<svg style="left:468px;top:550px" width="23" height="23" viewBox="0 0 23 23"><path d="M11.5 11.5L1.97 6A11 11 0 0 1 21.03 6Z" fill="#e33b2e"/><path d="M11.5 11.5L21.03 6A11 11 0 0 1 11.5 22.5Z" fill="#f7c531"/><path d="M11.5 11.5L11.5 22.5A11 11 0 0 1 1.97 6Z" fill="#2fa350"/><circle cx="11.5" cy="11.5" r="5.3" fill="#fff"/><circle cx="11.5" cy="11.5" r="4.1" fill="#4a86e6"/></svg>
<svg style="left:480px;top:561px" width="12" height="12" viewBox="0 0 12 12"><circle cx="6" cy="6" r="5.5" fill="#17869a"/><text x="6" y="9" font-family="Liberation Sans" font-size="8" font-weight="bold" fill="#fff" text-anchor="middle">N</text></svg>
<svg style="left:514.5px;top:550px" width="23" height="23" viewBox="0 0 23 23"><path d="M11.5 11.5L1.97 6A11 11 0 0 1 21.03 6Z" fill="#e33b2e"/><path d="M11.5 11.5L21.03 6A11 11 0 0 1 11.5 22.5Z" fill="#f7c531"/><path d="M11.5 11.5L11.5 22.5A11 11 0 0 1 1.97 6Z" fill="#2fa350"/><circle cx="11.5" cy="11.5" r="5.3" fill="#fff"/><circle cx="11.5" cy="11.5" r="4.1" fill="#4a86e6"/></svg>
<svg style="left:526px;top:561px" width="12" height="12" viewBox="0 0 12 12"><circle cx="6" cy="6" r="5.5" fill="#2a2a2a"/><circle cx="6" cy="5" r="2" fill="#777"/><path d="M2.5 10C3 7.5 9 7.5 9.5 10" fill="#666"/></svg>
<svg style="left:560px;top:548px" width="25" height="25" viewBox="0 0 25 25"><circle cx="10" cy="9.5" r="8" fill="#f2e6e6" stroke="#d23c3c" stroke-width="1.6"/><path d="M5 5L15 14" stroke="#d23c3c" stroke-width="1.6"/><path d="M9 8L15.5 17M13 8L9.5 16" stroke="#555" stroke-width="1.2"/><circle cx="16.5" cy="19.5" r="3" fill="none" stroke="#3a8fd8" stroke-width="1.8"/><circle cx="9.5" cy="19" r="3" fill="none" stroke="#3a8fd8" stroke-width="1.8"/></svg>
<svg style="left:850px;top:560px" width="8" height="4" viewBox="0 0 8 4"><path d="M4 0.5L7.5 3.5H0.5Z" fill="#f4f4f4"/></svg>
<svg style="left:865px;top:553px" width="15" height="15" viewBox="0 0 15 15"><path d="M2 6H6V4H3.5V2M4.5 6V11M7 4H13V14H7Z" fill="none" stroke="#f0f0f0" stroke-width="1.2"/><rect x="8.5" y="6" width="3" height="7" fill="#f0f0f0"/></svg>
<svg style="left:883px;top:553px" width="15" height="15" viewBox="0 0 15 15"><path d="M2.5 14V1.5" stroke="#f0f0f0" stroke-width="1.2"/><path d="M3 1.5H10V8H3Z" fill="#f0f0f0"/><circle cx="10.5" cy="10.5" r="3.6" fill="#e03a2c"/><path d="M9 9L12 12M12 9L9 12" stroke="#fff" stroke-width="1"/></svg>
<div style="left:902px;top:555px;width:12.5px;height:13px;background:#e83a5a"></div>
<svg style="left:902px;top:555px" width="12.5" height="13" viewBox="0 0 12.5 13"><path d="M3 3L6.25 10.5L9.5 3" fill="none" stroke="#fff" stroke-width="2"/></svg>
<svg style="left:920px;top:553px" width="14" height="15" viewBox="0 0 14 15"><path d="M4 1.5C2 1.5 1.5 5 4 5.5V13M4 5.5C6.5 5 6 1.5 4 1.5" fill="none" stroke="#f0f0f0" stroke-width="1.1"/><rect x="6.5" y="4.5" width="7" height="6" fill="none" stroke="#f0f0f0" stroke-width="1.1"/><path d="M8 13H12M10 10.5V13" stroke="#f0f0f0" stroke-width="1.1"/></svg>
<span class="t" style="left:943px;top:557.10px;font-size:8.8px;color:#f4f6f6;transform:scaleX(0.8915);transform-origin:0 0;">ENG</span>
<span class="t" style="left:973.5px;top:551.10px;font-size:8.8px;color:#f4f6f6;transform:scaleX(0.9548);transform-origin:0 0;">10:37 AM</span>
<span class="t" style="left:975.5px;top:564.10px;font-size:8.8px;color:#f4f6f6;transform:scaleX(0.9781);transform-origin:0 0;">1/7/2022</span>
</body></html>
